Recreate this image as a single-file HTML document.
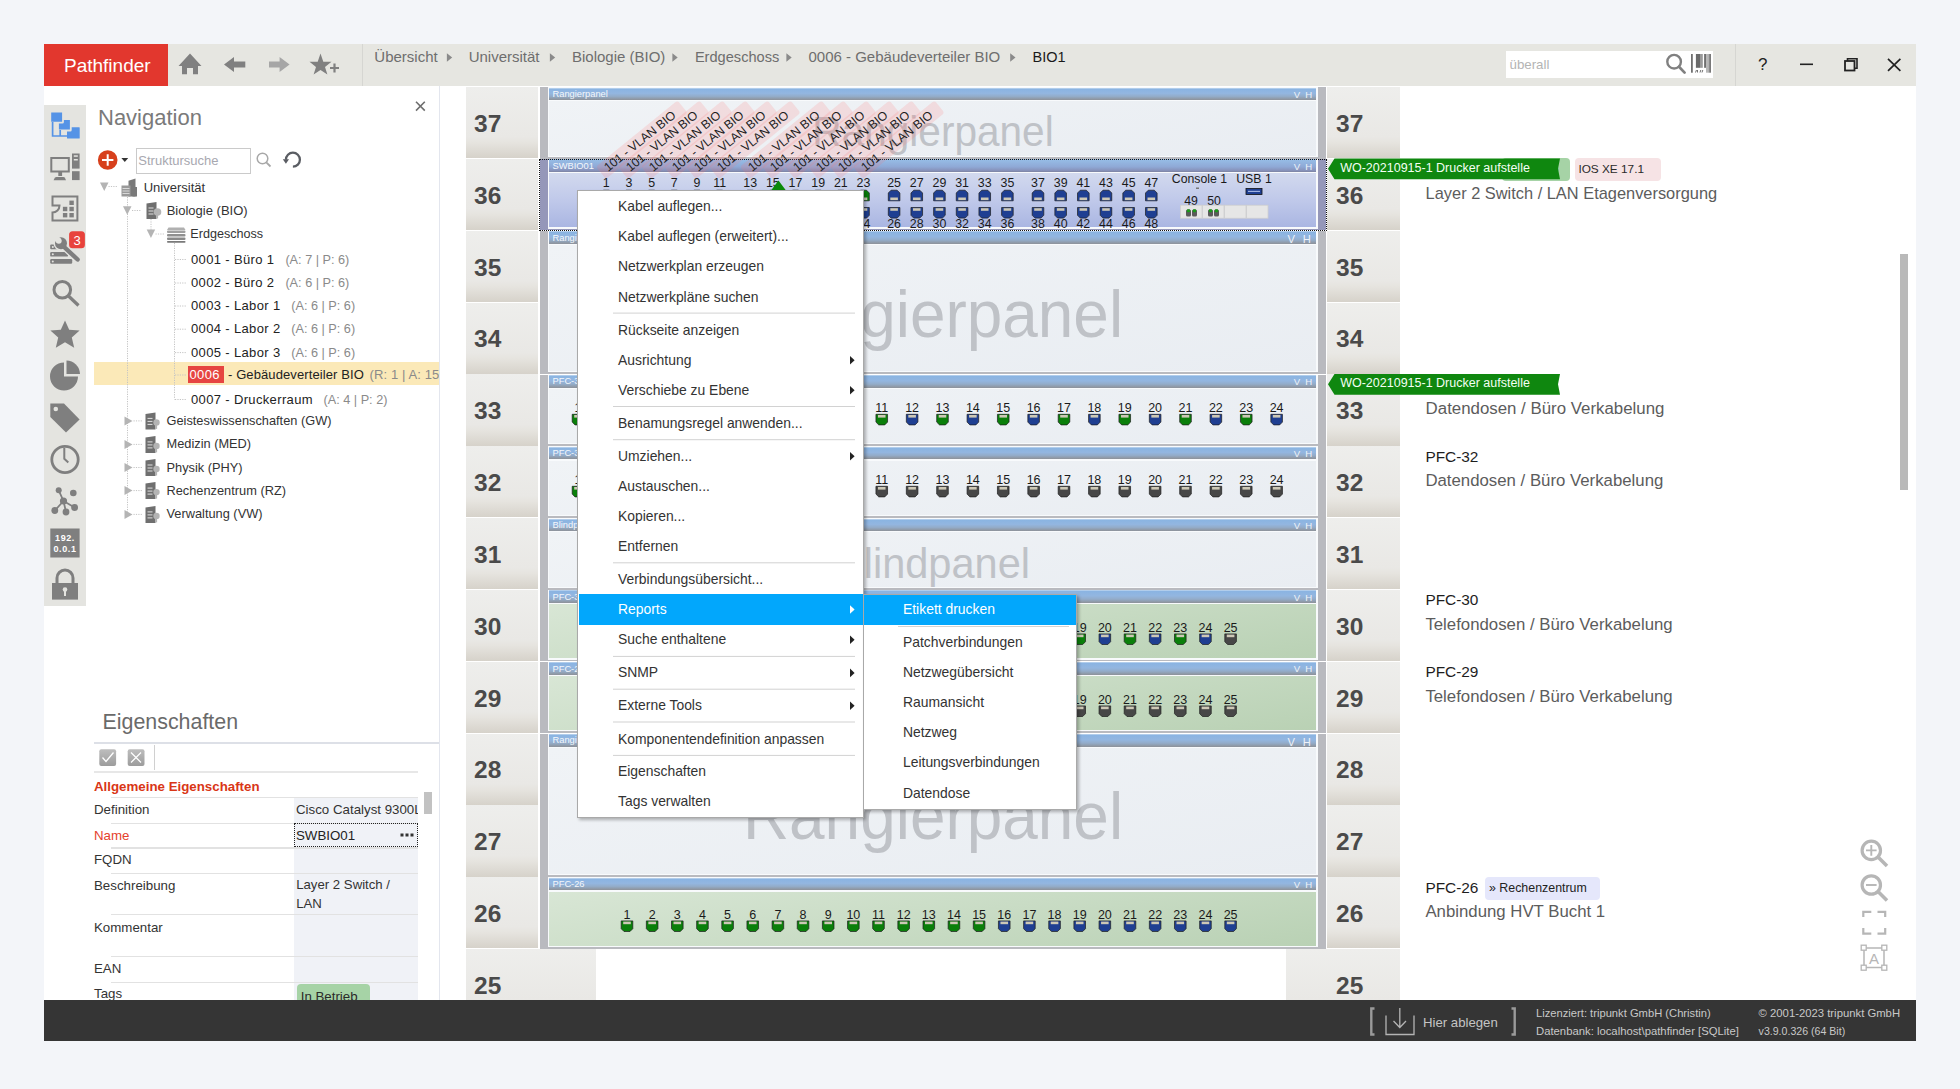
<!DOCTYPE html><html><head><meta charset="utf-8"><style>
html,body{margin:0;padding:0;}
body{width:1960px;height:1089px;overflow:hidden;background:#f3f5f9;position:relative;font-family:"Liberation Sans", sans-serif;}
.t{position:absolute;white-space:nowrap;font-family:"Liberation Sans", sans-serif;}
svg{position:absolute;overflow:visible;}
</style></head><body>
<div style="position:absolute;left:44px;top:44px;width:1872px;height:956px;background:#fff"></div>
<div style="position:absolute;left:168px;top:44px;width:1748px;height:42px;background:#e6e6e1"></div>
<div style="position:absolute;left:44px;top:44px;width:124px;height:42px;background:#e2372e"></div>
<div class="t" style="left:64px;top:52.30px;height:27px;line-height:27px;font-size:19px;color:#fff;font-weight:400;">Pathfinder</div>
<div style="position:absolute;left:362px;top:44px;width:1px;height:42px;background:#d6d6d2"></div>
<div style="position:absolute;left:1735px;top:44px;width:1px;height:42px;background:#d6d6d2"></div>
<svg style="left:0;top:0" width="1960" height="100">
<path d="M178.5 66 L190 53.5 L201.5 66 L198 66 L198 74.3 L193 74.3 L193 68 L187 68 L187 74.3 L182 74.3 L182 66 Z" fill="#808080"/>
<path d="M224 64.5 L234 57 L234 61.5 L245.3 61.5 L245.3 67.5 L234 67.5 L234 72 Z" fill="#808080"/>
<path d="M289.6 64.5 L279.6 57 L279.6 61.5 L269 61.5 L269 67.5 L279.6 67.5 L279.6 72 Z" fill="#a6a6a6"/>
<path d="M320.5 53.5 L323.3 61.8 L331.5 61.8 L325 67 L327.4 74.5 L320.5 70 L313.6 74.5 L316 67 L309.5 61.8 L317.7 61.8 Z" fill="#808080"/>
<path d="M330 68 h9 M334.5 63.5 v9" stroke="#808080" stroke-width="2.2"/>
</svg>
<div class="t" style="left:374.3px;top:46.00px;height:21px;line-height:21px;font-size:15px;color:#6e6e6e;font-weight:400;">Übersicht</div>
<svg style="left:0;top:0" width="1" height="1"><path d="M446.9 53.2 L452.2 57.5 L446.9 61.7 Z" fill="#8a8a8a"/></svg>
<div class="t" style="left:468.7px;top:46.00px;height:21px;line-height:21px;font-size:15px;color:#6e6e6e;font-weight:400;">Universität</div>
<svg style="left:0;top:0" width="1" height="1"><path d="M549.9 53.2 L555.2 57.5 L549.9 61.7 Z" fill="#8a8a8a"/></svg>
<div class="t" style="left:572px;top:46.00px;height:21px;line-height:21px;font-size:15px;color:#6e6e6e;font-weight:400;">Biologie (BIO)</div>
<svg style="left:0;top:0" width="1" height="1"><path d="M672.4 53.2 L677.7 57.5 L672.4 61.7 Z" fill="#8a8a8a"/></svg>
<div class="t" style="left:694.9px;top:46.50px;height:20px;line-height:20px;font-size:14.6px;color:#6e6e6e;font-weight:400;">Erdgeschoss</div>
<svg style="left:0;top:0" width="1" height="1"><path d="M786.4 53.2 L791.7 57.5 L786.4 61.7 Z" fill="#8a8a8a"/></svg>
<div class="t" style="left:808.5px;top:46.00px;height:21px;line-height:21px;font-size:15px;color:#6e6e6e;font-weight:400;">0006 - Gebäudeverteiler BIO</div>
<svg style="left:0;top:0" width="1" height="1"><path d="M1010.1999999999999 53.2 L1015.5 57.5 L1010.1999999999999 61.7 Z" fill="#8a8a8a"/></svg>
<div class="t" style="left:1032.5px;top:46.50px;height:20px;line-height:20px;font-size:14.5px;color:#1a1a1a;font-weight:400;">BIO1</div>
<div style="position:absolute;left:1505.5px;top:51px;width:207.4px;height:27px;background:#fff"></div>
<div class="t" style="left:1509.5px;top:55.00px;height:19px;line-height:19px;font-size:13.3px;color:#b4b4b4;font-weight:400;">überall</div>
<svg style="left:0;top:0" width="1" height="1">
<circle cx="1674.1" cy="61.7" r="6.8" fill="none" stroke="#808080" stroke-width="2.4"/>
<path d="M1679 66.8 L1684.6 72.6" stroke="#808080" stroke-width="2.7" stroke-linecap="round"/>
<rect x="1691" y="54" width="1.8" height="18.7" fill="#707070"/>
<rect x="1695.9" y="54" width="4.1" height="13.8" fill="#6a6a6a"/>
<rect x="1700" y="54" width="2.8" height="13.8" fill="#9a9a9a"/>
<rect x="1704.1" y="54" width="1.9" height="13.8" fill="#707070"/>
<rect x="1706" y="54" width="2.5" height="18.7" fill="#b8b8b8"/>
<rect x="1708.5" y="54" width="1.5" height="18.7" fill="#8a8a8a"/>
<rect x="1710" y="54" width="0.9" height="18.7" fill="#6a6a6a"/>
<path d="M1695.5 72.5 l1 -2.5 M1697.5 72.5 v-2.5 M1700 72.5 l0.8 -2.5 M1702 72.5 l0.8 -2.5" stroke="#606060" stroke-width="0.9"/>
</svg>
<div class="t" style="left:1562.80px;width:400px;text-align:center;top:52.50px;height:24px;line-height:24px;font-size:17px;color:#222;font-weight:400;">?</div>
<svg style="left:0;top:0" width="1" height="1">
<path d="M1800 64.3 h13" stroke="#222" stroke-width="1.6"/>
<rect x="1845" y="61" width="9.5" height="9.5" fill="none" stroke="#222" stroke-width="1.8"/>
<path d="M1847.5 61 v-2.2 h9.5 v9.5 h-2.5" fill="none" stroke="#222" stroke-width="1.6"/>
<path d="M1888 58.8 L1900.4 70.8 M1900.4 58.8 L1888 70.8" stroke="#222" stroke-width="1.7"/>
</svg>
<div style="position:absolute;left:44px;top:105px;width:42px;height:501px;background:#e4e4e0"></div>
<svg style="left:0;top:0" width="1" height="1">
<rect x="67" y="127.2" width="12.7" height="11.4" rx="0.6" fill="#5593e6"/>
<rect x="58" y="119" width="12.8" height="11.5" rx="0.6" fill="#5593e6" stroke="#e4e4e0" stroke-width="1.8"/>
<rect x="50.3" y="111.5" width="12.7" height="11.2" rx="0.6" fill="#5593e6" stroke="#e4e4e0" stroke-width="1.8"/>
<path d="M52.6 122 V136 H68 M60.2 130 V136" stroke="#5593e6" stroke-width="1.7" fill="none"/>
<g fill="none" stroke="#7f7f7f" stroke-width="2">
<rect x="51.3" y="158" width="17.5" height="13.5"/>
</g>
<rect x="58.3" y="171.8" width="3.8" height="4.2" fill="#7f7f7f"/>
<path d="M53.6 180.2 L54.8 177.8 Q55.3 177 56.5 177 H63.2 Q64.4 177 64.9 177.8 L66 180.2 Z" fill="#7f7f7f"/>
<rect x="72" y="153.5" width="7.6" height="15.1" fill="#7f7f7f"/>
<rect x="72" y="171.2" width="7.6" height="8.9" fill="#7f7f7f"/>
<rect x="73.8" y="155.3" width="4" height="1.5" fill="#e4e4e0"/>
<rect x="73.8" y="159" width="4" height="1.5" fill="#e4e4e0"/>
<path d="M52.5 205.5 V196.4 H77.4 V220.5 H52.5 V212.5 A7 7 0 0 0 59.5 205.5 Z" fill="none" stroke="#7f7f7f" stroke-width="2"/>
<g fill="#7f7f7f"><rect x="69.4" y="200.6" width="4.4" height="4.4"/><rect x="62.9" y="206.8" width="4.4" height="4.4"/><rect x="69.4" y="206.8" width="4.4" height="4.4"/><rect x="62.9" y="213" width="4.4" height="4.4"/><rect x="69.4" y="213" width="4.4" height="4.4"/></g>
<g fill="#7f7f7f">
<path d="M50.2 245.5 a1 1 0 0 1 1 -1 h4 l3 4.8 h-7 a1 1 0 0 1 -1 -1 z"/>
<rect x="50.2" y="252" width="17.8" height="4.6" rx="1.2"/>
<rect x="50.2" y="259" width="22" height="4.8" rx="1.2"/>
</g>
<g fill="#e4e4e0"><circle cx="52.8" cy="247" r="1"/><circle cx="52.8" cy="254.3" r="1"/><circle cx="52.8" cy="261.4" r="1"/></g>
<path d="M62 245 L77.6 259.5" stroke="#e4e4e0" stroke-width="7" stroke-linecap="round"/>
<circle cx="61" cy="243.3" r="7.5" fill="#e4e4e0"/>
<path d="M62 245 L77.6 259.5" stroke="#7f7f7f" stroke-width="4.4" stroke-linecap="round"/>
<circle cx="61" cy="243.3" r="6" fill="#7f7f7f"/>
<circle cx="58.8" cy="240.8" r="2.9" fill="#e4e4e0"/>
<path d="M58.8 240.8 L53 235" stroke="#e4e4e0" stroke-width="5.8"/>
<rect x="69.1" y="231.3" width="15.8" height="16.9" rx="3.5" fill="#e8423c"/>
<text x="77" y="245.2" font-size="13" fill="#fff" text-anchor="middle" font-family="Liberation Sans">3</text>
<circle cx="62.3" cy="289.8" r="8.3" fill="none" stroke="#7f7f7f" stroke-width="3"/>
<path d="M68.5 296 L78.5 305.5" stroke="#7f7f7f" stroke-width="3.2"/>
<path d="M65 320.4 L69.2 329.8 L79.6 330.5 L71.8 337.5 L74.2 347.7 L65 342.3 L55.8 347.7 L58.2 337.5 L50.4 330.5 L60.8 329.8 Z" fill="#7f7f7f"/>
<path d="M64 362.5 A14 14 0 1 0 78 376.5 L64 376.5 Z" fill="#7f7f7f"/>
<path d="M66.5 360.5 A14 14 0 0 1 80 374 L66.5 374 Z" fill="#7f7f7f"/>
<path d="M50.3 403.5 L64 403.5 L79.6 419.5 L66 432.5 L50.3 417 Z" fill="#7f7f7f"/>
<circle cx="55.8" cy="409" r="2.3" fill="#e4e4e0"/>
<circle cx="65" cy="459.5" r="13.2" fill="none" stroke="#7f7f7f" stroke-width="2.8"/>
<path d="M64.3 448 v10.8 l4 3.8" fill="none" stroke="#7f7f7f" stroke-width="2"/>
<g stroke="#7f7f7f" stroke-width="1.8"><path d="M63.5 501 L58.7 490.3 M63.5 501 L54.8 510.5 M63.5 501 L66 512 M63.5 501 L74.6 507.5"/></g>
<g fill="#7f7f7f"><circle cx="63.5" cy="501" r="3.6"/><circle cx="58.7" cy="490.3" r="3"/><circle cx="73.3" cy="493" r="3.3"/><circle cx="54.8" cy="510.5" r="3.4"/><circle cx="66" cy="512" r="3.4"/><circle cx="74.6" cy="507.5" r="3.4"/></g>
<rect x="50.3" y="528.5" width="29.3" height="29" fill="#7f7f7f"/>
<text x="65" y="540.5" font-size="9" fill="#fff" text-anchor="middle" font-weight="700" font-family="Liberation Sans" letter-spacing="0.6">192.</text>
<text x="65" y="552" font-size="9" fill="#fff" text-anchor="middle" font-weight="700" font-family="Liberation Sans" letter-spacing="0.6">0.0.1</text>
<path d="M57 583 v-5 a8 8 0 0 1 16 0 v5" fill="none" stroke="#7f7f7f" stroke-width="3"/>
<rect x="52" y="583" width="26" height="16.6" fill="#7f7f7f"/>
<circle cx="65" cy="589.5" r="2.3" fill="#e4e4e0"/>
<rect x="64" y="590" width="2" height="6" fill="#e4e4e0"/>
</svg>
<div style="position:absolute;left:439px;top:86px;width:1px;height:914px;background:#e3e6ee"></div>
<div class="t" style="left:98px;top:102.40px;height:31px;line-height:31px;font-size:22px;color:#7a7a7a;font-weight:400;">Navigation</div>
<svg style="left:0;top:0" width="1" height="1">
<path d="M416 101.8 L424.8 110.6 M424.8 101.8 L416 110.6" stroke="#6e6e6e" stroke-width="1.6"/>
<circle cx="107.7" cy="160" r="9.8" fill="#d7401c"/>
<path d="M102 160 h11.4 M107.7 154.3 v11.4" stroke="#fff" stroke-width="2"/>
<path d="M121.4 158 h6.8 l-3.4 4 z" fill="#333"/>
<circle cx="262.5" cy="158.5" r="5.3" fill="none" stroke="#a8a8a8" stroke-width="1.5"/>
<path d="M266.3 162.3 L270.5 166.5" stroke="#a8a8a8" stroke-width="1.8"/>
<path d="M285.9 159.7 A7 7 0 1 1 292.9 166.7" fill="none" stroke="#5a5d63" stroke-width="2.3"/>
<path d="M282.8 159.3 L289 159.3 L285.9 163.8 Z" fill="#5a5d63"/>
</svg>
<div style="position:absolute;left:135.5px;top:147.5px;width:113.5px;height:24.5px;border:1px solid #cacaca;background:#fff"></div>
<div class="t" style="left:138.3px;top:151.50px;height:18px;line-height:18px;font-size:13px;color:#a8a8b0;font-weight:400;">Struktursuche</div>
<div style="position:absolute;left:94px;top:362px;width:345px;height:23.2px;background:#fbe9b8"></div>
<svg style="left:0;top:0" width="1" height="1"><g stroke="#c4c4c4" stroke-width="1" stroke-dasharray="1.2 1.2" fill="none"><path d="M127.5 197 V514.5"/><path d="M151 219 V234"/><path d="M174.5 243 V399.5"/><path d="M108.5 186.5 h9 M132 210.5 h9 M155.5 234 h9"/><path d="M175 259.5 h12"/><path d="M175 283.0 h12"/><path d="M175 306.0 h12"/><path d="M175 329.2 h12"/><path d="M175 352.6 h12"/><path d="M175 375.0 h12"/><path d="M175 399.5 h12"/><path d="M133.5 420.9 h9"/><path d="M133.5 444.4 h9"/><path d="M133.5 467.5 h9"/><path d="M133.5 490.6 h9"/><path d="M133.5 514.4 h9"/></g><path d="M100 182.5 h8.5 l-4.25 8.5 z" fill="#b4b4b4"/><path d="M123 206.3 h8.5 l-4.25 8.5 z" fill="#b4b4b4"/><path d="M146.7 229.5 h8.5 l-4.25 8.5 z" fill="#b4b4b4"/><path d="M124.5 416.4 l8 4.5 l-8 4.5 z" fill="#b4b4b4"/><path d="M124.5 439.9 l8 4.5 l-8 4.5 z" fill="#b4b4b4"/><path d="M124.5 463.0 l8 4.5 l-8 4.5 z" fill="#b4b4b4"/><path d="M124.5 486.1 l8 4.5 l-8 4.5 z" fill="#b4b4b4"/><path d="M124.5 509.9 l8 4.5 l-8 4.5 z" fill="#b4b4b4"/><g fill="#7a7a7a"><path d="M128.5 180.8 L135.5 178.6 V196.5 H128.5 Z"/><rect x="132.5" y="187" width="4.5" height="9.5"/></g>
<g fill="#9a9a9a"><rect x="121.5" y="185.5" width="9" height="11"/></g>
<g stroke="#e8e8e8" stroke-width="0.8"><path d="M122.5 188.5 h7 M122.5 191 h7 M122.5 193.5 h7"/></g><g><path d="M146.5 203.5 L156.5 202 V219 H146.5 Z" fill="#6f6f6f"/>
<path d="M148.5 208 h5 M148.5 211 h5 M148.5 214 h5" stroke="#e0e0e0" stroke-width="1"/>
<circle cx="157.5" cy="212" r="3.8" fill="#b4b4b4"/><rect x="156.9" y="214" width="1.2" height="4.5" fill="#b4b4b4"/></g><g><path d="M145.5 413.9 L155.5 412.4 V429.4 H145.5 Z" fill="#6f6f6f"/>
<path d="M147.5 418.4 h5 M147.5 421.4 h5 M147.5 424.4 h5" stroke="#e0e0e0" stroke-width="1"/>
<circle cx="156.5" cy="422.4" r="3.2" fill="#b4b4b4"/><rect x="155.9" y="424.4" width="1.2" height="4.5" fill="#b4b4b4"/></g><g><path d="M145.5 437.4 L155.5 435.9 V452.9 H145.5 Z" fill="#6f6f6f"/>
<path d="M147.5 441.9 h5 M147.5 444.9 h5 M147.5 447.9 h5" stroke="#e0e0e0" stroke-width="1"/>
<circle cx="156.5" cy="445.9" r="3.2" fill="#b4b4b4"/><rect x="155.9" y="447.9" width="1.2" height="4.5" fill="#b4b4b4"/></g><g><path d="M145.5 460.5 L155.5 459.0 V476.0 H145.5 Z" fill="#6f6f6f"/>
<path d="M147.5 465.0 h5 M147.5 468.0 h5 M147.5 471.0 h5" stroke="#e0e0e0" stroke-width="1"/>
<circle cx="156.5" cy="469.0" r="3.2" fill="#b4b4b4"/><rect x="155.9" y="471.0" width="1.2" height="4.5" fill="#b4b4b4"/></g><g><path d="M145.5 483.6 L155.5 482.1 V499.1 H145.5 Z" fill="#6f6f6f"/>
<path d="M147.5 488.1 h5 M147.5 491.1 h5 M147.5 494.1 h5" stroke="#e0e0e0" stroke-width="1"/>
<circle cx="156.5" cy="492.1" r="3.2" fill="#b4b4b4"/><rect x="155.9" y="494.1" width="1.2" height="4.5" fill="#b4b4b4"/></g><g><path d="M145.5 507.4 L155.5 505.9 V522.9 H145.5 Z" fill="#6f6f6f"/>
<path d="M147.5 511.9 h5 M147.5 514.9 h5 M147.5 517.9 h5" stroke="#e0e0e0" stroke-width="1"/>
<circle cx="156.5" cy="515.9" r="3.2" fill="#b4b4b4"/><rect x="155.9" y="517.9" width="1.2" height="4.5" fill="#b4b4b4"/></g><g fill="#8a8a8a"><path d="M168.5 227.5 h15.5 l1.5 2.5 h-18.5 z" fill="#b0b0b0"/><rect x="167" y="230.5" width="18.5" height="2.5" rx="1" fill="#a0a0a0"/><rect x="167" y="234" width="18.5" height="2.5" rx="1" fill="#909090"/><rect x="167" y="237.5" width="18.5" height="2.5" rx="1"/><rect x="167" y="241" width="18.5" height="1.8" rx="0.8" fill="#7a7a7a"/></g></svg>
<div class="t" style="left:143.7px;top:179.00px;height:18px;line-height:18px;font-size:13px;color:#333;font-weight:400;">Universität</div>
<div class="t" style="left:166.7px;top:201.80px;height:18px;line-height:18px;font-size:13px;color:#333;font-weight:400;">Biologie (BIO)</div>
<div class="t" style="left:190.3px;top:225.20px;height:18px;line-height:18px;font-size:12.6px;color:#333;font-weight:400;">Erdgeschoss</div>
<div class="t" style="left:191px;top:250.50px;height:18px;line-height:18px;font-size:13px;color:#222;font-weight:400;letter-spacing:0.35px">0001 - Büro 1</div>
<div class="t" style="left:285.4px;top:250.50px;height:18px;line-height:18px;font-size:12.7px;color:#8a8a8a;font-weight:400;">(A: 7 | P: 6)</div>
<div class="t" style="left:191px;top:274.00px;height:18px;line-height:18px;font-size:13px;color:#222;font-weight:400;letter-spacing:0.35px">0002 - Büro 2</div>
<div class="t" style="left:285.4px;top:274.00px;height:18px;line-height:18px;font-size:12.7px;color:#8a8a8a;font-weight:400;">(A: 6 | P: 6)</div>
<div class="t" style="left:191px;top:297.00px;height:18px;line-height:18px;font-size:13px;color:#222;font-weight:400;letter-spacing:0.35px">0003 - Labor 1</div>
<div class="t" style="left:291.2px;top:297.00px;height:18px;line-height:18px;font-size:12.7px;color:#8a8a8a;font-weight:400;">(A: 6 | P: 6)</div>
<div class="t" style="left:191px;top:320.20px;height:18px;line-height:18px;font-size:13px;color:#222;font-weight:400;letter-spacing:0.35px">0004 - Labor 2</div>
<div class="t" style="left:291.2px;top:320.20px;height:18px;line-height:18px;font-size:12.7px;color:#8a8a8a;font-weight:400;">(A: 6 | P: 6)</div>
<div class="t" style="left:191px;top:343.60px;height:18px;line-height:18px;font-size:13px;color:#222;font-weight:400;letter-spacing:0.35px">0005 - Labor 3</div>
<div class="t" style="left:291.2px;top:343.60px;height:18px;line-height:18px;font-size:12.7px;color:#8a8a8a;font-weight:400;">(A: 6 | P: 6)</div>
<div class="t" style="left:191px;top:390.50px;height:18px;line-height:18px;font-size:13px;color:#222;font-weight:400;letter-spacing:0.35px">0007 - Druckerraum</div>
<div class="t" style="left:323.5px;top:390.50px;height:18px;line-height:18px;font-size:12.7px;color:#8a8a8a;font-weight:400;">(A: 4 | P: 2)</div>
<div style="position:absolute;left:188px;top:365.5px;width:35.6px;height:17px;background:#e64541"></div>
<div class="t" style="left:189.5px;top:366.00px;height:18px;line-height:18px;font-size:13px;color:#fff;font-weight:400;letter-spacing:0.35px">0006</div>
<div class="t" style="left:228px;top:365.9px;height:18px;line-height:18px;font-size:13px;color:#222;width:211px;overflow:hidden;letter-spacing:0.1px">- Gebäudeverteiler BIO <span style="color:#8a8a8a;margin-left:2px">(R: 1 | A: 15 | P: 6)</span></div>
<div class="t" style="left:166.5px;top:411.90px;height:18px;line-height:18px;font-size:12.8px;color:#333;font-weight:400;">Geisteswissenschaften (GW)</div>
<div class="t" style="left:166.5px;top:435.40px;height:18px;line-height:18px;font-size:12.8px;color:#333;font-weight:400;">Medizin (MED)</div>
<div class="t" style="left:166.5px;top:458.50px;height:18px;line-height:18px;font-size:12.8px;color:#333;font-weight:400;">Physik (PHY)</div>
<div class="t" style="left:166.5px;top:481.60px;height:18px;line-height:18px;font-size:12.8px;color:#333;font-weight:400;">Rechenzentrum (RZ)</div>
<div class="t" style="left:166.5px;top:505.40px;height:18px;line-height:18px;font-size:12.8px;color:#333;font-weight:400;">Verwaltung (VW)</div>
<div class="t" style="left:102.5px;top:707.40px;height:30px;line-height:30px;font-size:21.4px;color:#6a6a6a;font-weight:400;">Eigenschaften</div>
<div style="position:absolute;left:94px;top:742px;width:345px;height:2px;background:#dde0e7"></div>
<svg style="left:0;top:0" width="1" height="1">
<defs><linearGradient id="gb" x1="0" y1="0" x2="0" y2="1"><stop offset="0" stop-color="#bdbdbd"/><stop offset="1" stop-color="#9c9c9c"/></linearGradient></defs>
<rect x="99.3" y="749.3" width="16.8" height="16.8" rx="2" fill="url(#gb)"/>
<path d="M102.5 757.5 L106 761.5 L113.5 752.5" fill="none" stroke="#fff" stroke-width="1.3"/>
<rect x="127.7" y="749.3" width="16.8" height="16.8" rx="2" fill="url(#gb)"/>
<path d="M131 752.5 L141 762.5 M141 752.5 L131 762.5" stroke="#fff" stroke-width="1.2"/>
</svg>
<div style="position:absolute;left:153.5px;top:745px;width:1.2px;height:25px;background:#d0d0d0"></div>
<div style="position:absolute;left:94px;top:771px;width:324px;height:1.5px;background:#e7e7e7"></div>
<div class="t" style="left:94px;top:776.70px;height:19px;line-height:19px;font-size:13.3px;color:#d93616;font-weight:700;">Allgemeine Eigenschaften</div>
<div style="position:absolute;left:294px;top:797.5px;width:124px;height:202.5px;background:#f0f2f7"></div>
<div style="position:absolute;left:111px;top:797px;width:307px;height:1.2px;background:#e2e2e2"></div>
<div style="position:absolute;left:111px;top:822.6px;width:307px;height:1.2px;background:#e2e2e2"></div>
<div style="position:absolute;left:111px;top:847.4px;width:307px;height:1.2px;background:#e2e2e2"></div>
<div style="position:absolute;left:111px;top:872.7px;width:307px;height:1.2px;background:#e2e2e2"></div>
<div style="position:absolute;left:111px;top:914.3px;width:307px;height:1.2px;background:#e2e2e2"></div>
<div style="position:absolute;left:111px;top:956.2px;width:307px;height:1.2px;background:#e2e2e2"></div>
<div style="position:absolute;left:111px;top:981.5px;width:307px;height:1.2px;background:#e2e2e2"></div>
<div class="t" style="left:94px;top:800.10px;height:19px;line-height:19px;font-size:13.3px;color:#333;font-weight:400;">Definition</div>
<div class="t" style="left:94px;top:825.50px;height:19px;line-height:19px;font-size:13.3px;color:#e5412d;font-weight:400;">Name</div>
<div class="t" style="left:94px;top:850.30px;height:19px;line-height:19px;font-size:13.3px;color:#333;font-weight:400;">FQDN</div>
<div class="t" style="left:94px;top:875.90px;height:19px;line-height:19px;font-size:13.3px;color:#333;font-weight:400;">Beschreibung</div>
<div class="t" style="left:94px;top:918.00px;height:19px;line-height:19px;font-size:13.3px;color:#333;font-weight:400;">Kommentar</div>
<div class="t" style="left:94px;top:959.10px;height:19px;line-height:19px;font-size:13.3px;color:#333;font-weight:400;">EAN</div>
<div class="t" style="left:94px;top:983.90px;height:19px;line-height:19px;font-size:13.3px;color:#333;font-weight:400;">Tags</div>
<div class="t" style="left:296px;top:800px;height:19px;line-height:19px;font-size:13.3px;color:#333;width:122px;overflow:hidden">Cisco Catalyst 9300L-48P-4X</div>
<div style="position:absolute;left:294px;top:823.4px;width:124px;height:23.4px;border:1px dotted #222;box-sizing:border-box"></div>
<div class="t" style="left:296px;top:825.50px;height:19px;line-height:19px;font-size:13.3px;color:#222;font-weight:400;">SWBIO01</div>
<svg style="left:0;top:0" width="1" height="1"><g fill="#333"><rect x="400.5" y="833.5" width="3" height="3"/><rect x="405.5" y="833.5" width="3" height="3"/><rect x="410.5" y="833.5" width="3" height="3"/></g></svg>
<div class="t" style="left:296.2px;top:876.40px;height:18px;line-height:18px;font-size:13.2px;color:#333;font-weight:400;">Layer 2 Switch /</div>
<div class="t" style="left:296.2px;top:894.90px;height:18px;line-height:18px;font-size:13.2px;color:#333;font-weight:400;">LAN</div>
<div style="position:absolute;left:423.5px;top:792px;width:8.2px;height:22px;background:#c2c2c2"></div>
<div style="position:absolute;left:296.7px;top:983.7px;width:73px;height:16.3px;overflow:hidden;background:#a6d3a6;border-radius:4px 4px 0 0"><div class="t" style="left:4px;top:4.5px;height:18px;line-height:18px;font-size:13.3px;color:#2a2a2a">In Betrieb</div></div>
<div style="position:absolute;left:44px;top:1000px;width:1872px;height:41.4px;background:#353535"></div>
<svg style="left:0;top:0" width="1" height="1">
<path d="M1374.5 1008.5 h-3.2 v26 h3.2" fill="none" stroke="#9a9a9a" stroke-width="2.4"/>
<path d="M1511.5 1008.5 h3.2 v26 h-3.2" fill="none" stroke="#9a9a9a" stroke-width="2.4"/>
<path d="M1386 1015.5 v19 h28 v-19" fill="none" stroke="#b4b4b4" stroke-width="1.3"/>
<path d="M1399.8 1008 v19 M1393.5 1021 L1399.8 1027.5 L1406 1021" fill="none" stroke="#b4b4b4" stroke-width="1.3"/>
</svg>
<div class="t" style="left:1423px;top:1013.50px;height:18px;line-height:18px;font-size:13.2px;color:#c4c4c4;font-weight:400;">Hier ablegen</div>
<div class="t" style="left:1536px;top:1004.60px;height:16px;line-height:16px;font-size:11.2px;color:#c8c8c8;font-weight:400;">Lizenziert: tripunkt GmbH (Christin)</div>
<div class="t" style="left:1536px;top:1023.00px;height:16px;line-height:16px;font-size:11.3px;color:#c8c8c8;font-weight:400;">Datenbank: localhost\pathfinder [SQLite]</div>
<div class="t" style="left:1758.6px;top:1004.60px;height:16px;line-height:16px;font-size:11.3px;color:#c8c8c8;font-weight:400;">© 2001-2023 tripunkt GmbH</div>
<div class="t" style="left:1758.6px;top:1023.50px;height:15px;line-height:15px;font-size:10.6px;color:#c8c8c8;font-weight:400;">v3.9.0.326 (64 Bit)</div>
<div style="position:absolute;left:466px;top:87.0px;width:72px;height:71.23px;background:linear-gradient(to bottom,#eeeeec 0%,#e9e8e5 70%,#e6e4df 78%,#d6d2ca 100%)"></div>
<div style="position:absolute;left:1327px;top:87.0px;width:73px;height:71.23px;background:linear-gradient(to bottom,#eeeeec 0%,#e9e8e5 70%,#e6e4df 78%,#d6d2ca 100%)"></div>
<div class="t" style="left:474px;top:106.92px;height:34px;line-height:34px;font-size:24.5px;color:#4a4a4a;font-weight:700;">37</div>
<div class="t" style="left:1336px;top:106.92px;height:34px;line-height:34px;font-size:24.5px;color:#4a4a4a;font-weight:700;">37</div>
<div style="position:absolute;left:466px;top:158.83px;width:72px;height:71.23px;background:linear-gradient(to bottom,#eeeeec 0%,#e9e8e5 70%,#e6e4df 78%,#d6d2ca 100%)"></div>
<div style="position:absolute;left:1327px;top:158.83px;width:73px;height:71.23px;background:linear-gradient(to bottom,#eeeeec 0%,#e9e8e5 70%,#e6e4df 78%,#d6d2ca 100%)"></div>
<div class="t" style="left:474px;top:178.75px;height:34px;line-height:34px;font-size:24.5px;color:#4a4a4a;font-weight:700;">36</div>
<div class="t" style="left:1336px;top:178.75px;height:34px;line-height:34px;font-size:24.5px;color:#4a4a4a;font-weight:700;">36</div>
<div style="position:absolute;left:466px;top:230.67px;width:72px;height:71.23px;background:linear-gradient(to bottom,#eeeeec 0%,#e9e8e5 70%,#e6e4df 78%,#d6d2ca 100%)"></div>
<div style="position:absolute;left:1327px;top:230.67px;width:73px;height:71.23px;background:linear-gradient(to bottom,#eeeeec 0%,#e9e8e5 70%,#e6e4df 78%,#d6d2ca 100%)"></div>
<div class="t" style="left:474px;top:250.58px;height:34px;line-height:34px;font-size:24.5px;color:#4a4a4a;font-weight:700;">35</div>
<div class="t" style="left:1336px;top:250.58px;height:34px;line-height:34px;font-size:24.5px;color:#4a4a4a;font-weight:700;">35</div>
<div style="position:absolute;left:466px;top:302.5px;width:72px;height:71.23px;background:linear-gradient(to bottom,#eeeeec 0%,#e9e8e5 70%,#e6e4df 78%,#d6d2ca 100%)"></div>
<div style="position:absolute;left:1327px;top:302.5px;width:73px;height:71.23px;background:linear-gradient(to bottom,#eeeeec 0%,#e9e8e5 70%,#e6e4df 78%,#d6d2ca 100%)"></div>
<div class="t" style="left:474px;top:322.42px;height:34px;line-height:34px;font-size:24.5px;color:#4a4a4a;font-weight:700;">34</div>
<div class="t" style="left:1336px;top:322.42px;height:34px;line-height:34px;font-size:24.5px;color:#4a4a4a;font-weight:700;">34</div>
<div style="position:absolute;left:466px;top:374.33px;width:72px;height:71.23px;background:linear-gradient(to bottom,#eeeeec 0%,#e9e8e5 70%,#e6e4df 78%,#d6d2ca 100%)"></div>
<div style="position:absolute;left:1327px;top:374.33px;width:73px;height:71.23px;background:linear-gradient(to bottom,#eeeeec 0%,#e9e8e5 70%,#e6e4df 78%,#d6d2ca 100%)"></div>
<div class="t" style="left:474px;top:394.25px;height:34px;line-height:34px;font-size:24.5px;color:#4a4a4a;font-weight:700;">33</div>
<div class="t" style="left:1336px;top:394.25px;height:34px;line-height:34px;font-size:24.5px;color:#4a4a4a;font-weight:700;">33</div>
<div style="position:absolute;left:466px;top:446.17px;width:72px;height:71.23px;background:linear-gradient(to bottom,#eeeeec 0%,#e9e8e5 70%,#e6e4df 78%,#d6d2ca 100%)"></div>
<div style="position:absolute;left:1327px;top:446.17px;width:73px;height:71.23px;background:linear-gradient(to bottom,#eeeeec 0%,#e9e8e5 70%,#e6e4df 78%,#d6d2ca 100%)"></div>
<div class="t" style="left:474px;top:466.08px;height:34px;line-height:34px;font-size:24.5px;color:#4a4a4a;font-weight:700;">32</div>
<div class="t" style="left:1336px;top:466.08px;height:34px;line-height:34px;font-size:24.5px;color:#4a4a4a;font-weight:700;">32</div>
<div style="position:absolute;left:466px;top:518.0px;width:72px;height:71.23px;background:linear-gradient(to bottom,#eeeeec 0%,#e9e8e5 70%,#e6e4df 78%,#d6d2ca 100%)"></div>
<div style="position:absolute;left:1327px;top:518.0px;width:73px;height:71.23px;background:linear-gradient(to bottom,#eeeeec 0%,#e9e8e5 70%,#e6e4df 78%,#d6d2ca 100%)"></div>
<div class="t" style="left:474px;top:537.92px;height:34px;line-height:34px;font-size:24.5px;color:#4a4a4a;font-weight:700;">31</div>
<div class="t" style="left:1336px;top:537.92px;height:34px;line-height:34px;font-size:24.5px;color:#4a4a4a;font-weight:700;">31</div>
<div style="position:absolute;left:466px;top:589.83px;width:72px;height:71.23px;background:linear-gradient(to bottom,#eeeeec 0%,#e9e8e5 70%,#e6e4df 78%,#d6d2ca 100%)"></div>
<div style="position:absolute;left:1327px;top:589.83px;width:73px;height:71.23px;background:linear-gradient(to bottom,#eeeeec 0%,#e9e8e5 70%,#e6e4df 78%,#d6d2ca 100%)"></div>
<div class="t" style="left:474px;top:609.75px;height:34px;line-height:34px;font-size:24.5px;color:#4a4a4a;font-weight:700;">30</div>
<div class="t" style="left:1336px;top:609.75px;height:34px;line-height:34px;font-size:24.5px;color:#4a4a4a;font-weight:700;">30</div>
<div style="position:absolute;left:466px;top:661.67px;width:72px;height:71.23px;background:linear-gradient(to bottom,#eeeeec 0%,#e9e8e5 70%,#e6e4df 78%,#d6d2ca 100%)"></div>
<div style="position:absolute;left:1327px;top:661.67px;width:73px;height:71.23px;background:linear-gradient(to bottom,#eeeeec 0%,#e9e8e5 70%,#e6e4df 78%,#d6d2ca 100%)"></div>
<div class="t" style="left:474px;top:681.58px;height:34px;line-height:34px;font-size:24.5px;color:#4a4a4a;font-weight:700;">29</div>
<div class="t" style="left:1336px;top:681.58px;height:34px;line-height:34px;font-size:24.5px;color:#4a4a4a;font-weight:700;">29</div>
<div style="position:absolute;left:466px;top:733.5px;width:72px;height:71.23px;background:linear-gradient(to bottom,#eeeeec 0%,#e9e8e5 70%,#e6e4df 78%,#d6d2ca 100%)"></div>
<div style="position:absolute;left:1327px;top:733.5px;width:73px;height:71.23px;background:linear-gradient(to bottom,#eeeeec 0%,#e9e8e5 70%,#e6e4df 78%,#d6d2ca 100%)"></div>
<div class="t" style="left:474px;top:753.42px;height:34px;line-height:34px;font-size:24.5px;color:#4a4a4a;font-weight:700;">28</div>
<div class="t" style="left:1336px;top:753.42px;height:34px;line-height:34px;font-size:24.5px;color:#4a4a4a;font-weight:700;">28</div>
<div style="position:absolute;left:466px;top:805.33px;width:72px;height:71.23px;background:linear-gradient(to bottom,#eeeeec 0%,#e9e8e5 70%,#e6e4df 78%,#d6d2ca 100%)"></div>
<div style="position:absolute;left:1327px;top:805.33px;width:73px;height:71.23px;background:linear-gradient(to bottom,#eeeeec 0%,#e9e8e5 70%,#e6e4df 78%,#d6d2ca 100%)"></div>
<div class="t" style="left:474px;top:825.25px;height:34px;line-height:34px;font-size:24.5px;color:#4a4a4a;font-weight:700;">27</div>
<div class="t" style="left:1336px;top:825.25px;height:34px;line-height:34px;font-size:24.5px;color:#4a4a4a;font-weight:700;">27</div>
<div style="position:absolute;left:466px;top:877.17px;width:72px;height:71.23px;background:linear-gradient(to bottom,#eeeeec 0%,#e9e8e5 70%,#e6e4df 78%,#d6d2ca 100%)"></div>
<div style="position:absolute;left:1327px;top:877.17px;width:73px;height:71.23px;background:linear-gradient(to bottom,#eeeeec 0%,#e9e8e5 70%,#e6e4df 78%,#d6d2ca 100%)"></div>
<div class="t" style="left:474px;top:897.08px;height:34px;line-height:34px;font-size:24.5px;color:#4a4a4a;font-weight:700;">26</div>
<div class="t" style="left:1336px;top:897.08px;height:34px;line-height:34px;font-size:24.5px;color:#4a4a4a;font-weight:700;">26</div>
<div style="position:absolute;left:466px;top:949.0px;width:130px;height:51.0px;background:linear-gradient(to bottom,#eeeeec,#e9e8e5)"></div>
<div style="position:absolute;left:1286px;top:949.0px;width:114px;height:51.0px;background:linear-gradient(to bottom,#eeeeec,#e9e8e5)"></div>
<div class="t" style="left:474px;top:968.92px;height:34px;line-height:34px;font-size:24.5px;color:#4a4a4a;font-weight:700;">25</div>
<div class="t" style="left:1336px;top:968.92px;height:34px;line-height:34px;font-size:24.5px;color:#4a4a4a;font-weight:700;">25</div>
<div style="position:absolute;left:540px;top:87.3px;width:786px;height:71.23px;background:#b9babf"></div>
<div style="position:absolute;left:548px;top:87.3px;width:770px;height:69.53px;background:#f8fafc"></div>
<div style="position:absolute;left:549px;top:87.6px;width:767px;height:12.6px;background:linear-gradient(to bottom,#d8e6f5 0px,#8ab4e2 1px,#93b6e0 45%,#93acc9 70%,#8f9aa8 90%,#8e9299 100%)"></div>
<div style="position:absolute;left:549px;top:101.4px;width:767px;height:54.13px;background:linear-gradient(170deg,#f0f3f6 0%,#e9edf2 100%)"></div>
<div class="t" style="left:552.5px;top:87.90px;height:13px;line-height:13px;font-size:9.3px;color:#f4f7fb;font-weight:400;">Rangierpanel</div>
<div class="t" style="left:1097.00px;width:400px;text-align:center;top:87.70px;height:13px;line-height:13px;font-size:9.6px;color:#eef2f8;font-weight:400;">V</div>
<div class="t" style="left:1108.70px;width:400px;text-align:center;top:87.70px;height:13px;line-height:13px;font-size:9.6px;color:#eef2f8;font-weight:400;">H</div>
<svg style="left:0;top:0" width="1" height="1"><text transform="translate(933 146.1) scale(0.957 1)" x="0" y="0" font-size="42.4" text-anchor="middle" fill="#bfc2c7" font-family="Liberation Sans">Rangierpanel</text></svg>
<div style="position:absolute;left:540px;top:159.13px;width:786px;height:71.23px;background:#9597b9"></div>
<div style="position:absolute;left:548px;top:159.13px;width:770px;height:69.53px;background:#f8fafc"></div>
<div style="position:absolute;left:549px;top:159.43px;width:767px;height:12.6px;background:linear-gradient(to bottom,#97bfe8 0%,#8fa9d6 60%,#8690b8 90%,#7d83a0 100%)"></div>
<div style="position:absolute;left:549px;top:173.23px;width:767px;height:54.13px;background:linear-gradient(to bottom,#d2d9ee 0%,#c0c9ea 50%,#aab6e2 100%)"></div>
<div class="t" style="left:552.5px;top:159.73px;height:13px;line-height:13px;font-size:9.3px;color:#f4f7fb;font-weight:400;">SWBIO01</div>
<div class="t" style="left:1097.00px;width:400px;text-align:center;top:159.53px;height:13px;line-height:13px;font-size:9.6px;color:#eef2f8;font-weight:400;">V</div>
<div class="t" style="left:1108.70px;width:400px;text-align:center;top:159.53px;height:13px;line-height:13px;font-size:9.6px;color:#eef2f8;font-weight:400;">H</div>
<div style="position:absolute;left:539px;top:158.5px;width:788px;height:72.5px;border:1px dotted #111;box-sizing:border-box"></div>
<svg style="left:0;top:0" width="1" height="1"><text x="606.30" y="187.30" font-size="12.4" text-anchor="middle" fill="#1a1a1a" font-family="Liberation Sans">1</text><text x="606.30" y="228.00" font-size="12.4" text-anchor="middle" fill="#1a1a1a" font-family="Liberation Sans">2</text><path d="M600.50 200.80 h11.6 v-7.8 l-2.8 -2.8 h-6 l-2.8 2.8 z" fill="#1f3f92" stroke="#1c1c1c" stroke-width="0.7"/><rect x="602.50" y="197.50" width="7.6" height="2.6" fill="#cdc8b6"/><path d="M600.50 207.50 h11.6 v7.8 l-2.8 2.8 h-6 l-2.8 -2.8 z" fill="#1f3f92" stroke="#1c1c1c" stroke-width="0.7"/><rect x="602.50" y="208.20" width="7.6" height="2.6" fill="#cdc8b6"/><text x="628.96" y="187.30" font-size="12.4" text-anchor="middle" fill="#1a1a1a" font-family="Liberation Sans">3</text><text x="628.96" y="228.00" font-size="12.4" text-anchor="middle" fill="#1a1a1a" font-family="Liberation Sans">4</text><path d="M623.16 200.80 h11.6 v-7.8 l-2.8 -2.8 h-6 l-2.8 2.8 z" fill="#1f3f92" stroke="#1c1c1c" stroke-width="0.7"/><rect x="625.16" y="197.50" width="7.6" height="2.6" fill="#cdc8b6"/><path d="M623.16 207.50 h11.6 v7.8 l-2.8 2.8 h-6 l-2.8 -2.8 z" fill="#1f3f92" stroke="#1c1c1c" stroke-width="0.7"/><rect x="625.16" y="208.20" width="7.6" height="2.6" fill="#cdc8b6"/><text x="651.62" y="187.30" font-size="12.4" text-anchor="middle" fill="#1a1a1a" font-family="Liberation Sans">5</text><text x="651.62" y="228.00" font-size="12.4" text-anchor="middle" fill="#1a1a1a" font-family="Liberation Sans">6</text><path d="M645.82 200.80 h11.6 v-7.8 l-2.8 -2.8 h-6 l-2.8 2.8 z" fill="#1f3f92" stroke="#1c1c1c" stroke-width="0.7"/><rect x="647.82" y="197.50" width="7.6" height="2.6" fill="#cdc8b6"/><path d="M645.82 207.50 h11.6 v7.8 l-2.8 2.8 h-6 l-2.8 -2.8 z" fill="#1f3f92" stroke="#1c1c1c" stroke-width="0.7"/><rect x="647.82" y="208.20" width="7.6" height="2.6" fill="#cdc8b6"/><text x="674.28" y="187.30" font-size="12.4" text-anchor="middle" fill="#1a1a1a" font-family="Liberation Sans">7</text><text x="674.28" y="228.00" font-size="12.4" text-anchor="middle" fill="#1a1a1a" font-family="Liberation Sans">8</text><path d="M668.48 200.80 h11.6 v-7.8 l-2.8 -2.8 h-6 l-2.8 2.8 z" fill="#1f3f92" stroke="#1c1c1c" stroke-width="0.7"/><rect x="670.48" y="197.50" width="7.6" height="2.6" fill="#cdc8b6"/><path d="M668.48 207.50 h11.6 v7.8 l-2.8 2.8 h-6 l-2.8 -2.8 z" fill="#1f3f92" stroke="#1c1c1c" stroke-width="0.7"/><rect x="670.48" y="208.20" width="7.6" height="2.6" fill="#cdc8b6"/><text x="696.94" y="187.30" font-size="12.4" text-anchor="middle" fill="#1a1a1a" font-family="Liberation Sans">9</text><text x="696.94" y="228.00" font-size="12.4" text-anchor="middle" fill="#1a1a1a" font-family="Liberation Sans">10</text><path d="M691.14 200.80 h11.6 v-7.8 l-2.8 -2.8 h-6 l-2.8 2.8 z" fill="#1f3f92" stroke="#1c1c1c" stroke-width="0.7"/><rect x="693.14" y="197.50" width="7.6" height="2.6" fill="#cdc8b6"/><path d="M691.14 207.50 h11.6 v7.8 l-2.8 2.8 h-6 l-2.8 -2.8 z" fill="#1f3f92" stroke="#1c1c1c" stroke-width="0.7"/><rect x="693.14" y="208.20" width="7.6" height="2.6" fill="#cdc8b6"/><text x="719.60" y="187.30" font-size="12.4" text-anchor="middle" fill="#1a1a1a" font-family="Liberation Sans">11</text><text x="719.60" y="228.00" font-size="12.4" text-anchor="middle" fill="#1a1a1a" font-family="Liberation Sans">12</text><path d="M713.80 200.80 h11.6 v-7.8 l-2.8 -2.8 h-6 l-2.8 2.8 z" fill="#1f3f92" stroke="#1c1c1c" stroke-width="0.7"/><rect x="715.80" y="197.50" width="7.6" height="2.6" fill="#cdc8b6"/><path d="M713.80 207.50 h11.6 v7.8 l-2.8 2.8 h-6 l-2.8 -2.8 z" fill="#1f3f92" stroke="#1c1c1c" stroke-width="0.7"/><rect x="715.80" y="208.20" width="7.6" height="2.6" fill="#cdc8b6"/><text x="750.20" y="187.30" font-size="12.4" text-anchor="middle" fill="#1a1a1a" font-family="Liberation Sans">13</text><text x="750.20" y="228.00" font-size="12.4" text-anchor="middle" fill="#1a1a1a" font-family="Liberation Sans">14</text><path d="M744.40 200.80 h11.6 v-7.8 l-2.8 -2.8 h-6 l-2.8 2.8 z" fill="#1f3f92" stroke="#1c1c1c" stroke-width="0.7"/><rect x="746.40" y="197.50" width="7.6" height="2.6" fill="#cdc8b6"/><path d="M744.40 207.50 h11.6 v7.8 l-2.8 2.8 h-6 l-2.8 -2.8 z" fill="#1f3f92" stroke="#1c1c1c" stroke-width="0.7"/><rect x="746.40" y="208.20" width="7.6" height="2.6" fill="#cdc8b6"/><text x="772.86" y="187.30" font-size="12.4" text-anchor="middle" fill="#1a1a1a" font-family="Liberation Sans">15</text><text x="772.86" y="228.00" font-size="12.4" text-anchor="middle" fill="#1a1a1a" font-family="Liberation Sans">16</text><path d="M767.06 200.80 h11.6 v-7.8 l-2.8 -2.8 h-6 l-2.8 2.8 z" fill="#1f3f92" stroke="#1c1c1c" stroke-width="0.7"/><rect x="769.06" y="197.50" width="7.6" height="2.6" fill="#cdc8b6"/><path d="M767.06 207.50 h11.6 v7.8 l-2.8 2.8 h-6 l-2.8 -2.8 z" fill="#1f3f92" stroke="#1c1c1c" stroke-width="0.7"/><rect x="769.06" y="208.20" width="7.6" height="2.6" fill="#cdc8b6"/><text x="795.52" y="187.30" font-size="12.4" text-anchor="middle" fill="#1a1a1a" font-family="Liberation Sans">17</text><text x="795.52" y="228.00" font-size="12.4" text-anchor="middle" fill="#1a1a1a" font-family="Liberation Sans">18</text><path d="M789.72 200.80 h11.6 v-7.8 l-2.8 -2.8 h-6 l-2.8 2.8 z" fill="#1f3f92" stroke="#1c1c1c" stroke-width="0.7"/><rect x="791.72" y="197.50" width="7.6" height="2.6" fill="#cdc8b6"/><path d="M789.72 207.50 h11.6 v7.8 l-2.8 2.8 h-6 l-2.8 -2.8 z" fill="#1f3f92" stroke="#1c1c1c" stroke-width="0.7"/><rect x="791.72" y="208.20" width="7.6" height="2.6" fill="#cdc8b6"/><text x="818.18" y="187.30" font-size="12.4" text-anchor="middle" fill="#1a1a1a" font-family="Liberation Sans">19</text><text x="818.18" y="228.00" font-size="12.4" text-anchor="middle" fill="#1a1a1a" font-family="Liberation Sans">20</text><path d="M812.38 200.80 h11.6 v-7.8 l-2.8 -2.8 h-6 l-2.8 2.8 z" fill="#1f3f92" stroke="#1c1c1c" stroke-width="0.7"/><rect x="814.38" y="197.50" width="7.6" height="2.6" fill="#cdc8b6"/><path d="M812.38 207.50 h11.6 v7.8 l-2.8 2.8 h-6 l-2.8 -2.8 z" fill="#1f3f92" stroke="#1c1c1c" stroke-width="0.7"/><rect x="814.38" y="208.20" width="7.6" height="2.6" fill="#cdc8b6"/><text x="840.84" y="187.30" font-size="12.4" text-anchor="middle" fill="#1a1a1a" font-family="Liberation Sans">21</text><text x="840.84" y="228.00" font-size="12.4" text-anchor="middle" fill="#1a1a1a" font-family="Liberation Sans">22</text><path d="M835.04 200.80 h11.6 v-7.8 l-2.8 -2.8 h-6 l-2.8 2.8 z" fill="#1f3f92" stroke="#1c1c1c" stroke-width="0.7"/><rect x="837.04" y="197.50" width="7.6" height="2.6" fill="#cdc8b6"/><path d="M835.04 207.50 h11.6 v7.8 l-2.8 2.8 h-6 l-2.8 -2.8 z" fill="#1f3f92" stroke="#1c1c1c" stroke-width="0.7"/><rect x="837.04" y="208.20" width="7.6" height="2.6" fill="#cdc8b6"/><text x="863.50" y="187.30" font-size="12.4" text-anchor="middle" fill="#1a1a1a" font-family="Liberation Sans">23</text><text x="863.50" y="228.00" font-size="12.4" text-anchor="middle" fill="#1a1a1a" font-family="Liberation Sans">24</text><path d="M857.70 200.80 h11.6 v-7.8 l-2.8 -2.8 h-6 l-2.8 2.8 z" fill="#0a7f0a" stroke="#1c1c1c" stroke-width="0.7"/><rect x="859.70" y="197.50" width="7.6" height="2.6" fill="#cdc8b6"/><path d="M857.70 207.50 h11.6 v7.8 l-2.8 2.8 h-6 l-2.8 -2.8 z" fill="#1f3f92" stroke="#1c1c1c" stroke-width="0.7"/><rect x="859.70" y="208.20" width="7.6" height="2.6" fill="#cdc8b6"/><text x="894.10" y="187.30" font-size="12.4" text-anchor="middle" fill="#1a1a1a" font-family="Liberation Sans">25</text><text x="894.10" y="228.00" font-size="12.4" text-anchor="middle" fill="#1a1a1a" font-family="Liberation Sans">26</text><path d="M888.30 200.80 h11.6 v-7.8 l-2.8 -2.8 h-6 l-2.8 2.8 z" fill="#1f3f92" stroke="#1c1c1c" stroke-width="0.7"/><rect x="890.30" y="197.50" width="7.6" height="2.6" fill="#cdc8b6"/><path d="M888.30 207.50 h11.6 v7.8 l-2.8 2.8 h-6 l-2.8 -2.8 z" fill="#1f3f92" stroke="#1c1c1c" stroke-width="0.7"/><rect x="890.30" y="208.20" width="7.6" height="2.6" fill="#cdc8b6"/><text x="916.76" y="187.30" font-size="12.4" text-anchor="middle" fill="#1a1a1a" font-family="Liberation Sans">27</text><text x="916.76" y="228.00" font-size="12.4" text-anchor="middle" fill="#1a1a1a" font-family="Liberation Sans">28</text><path d="M910.96 200.80 h11.6 v-7.8 l-2.8 -2.8 h-6 l-2.8 2.8 z" fill="#1f3f92" stroke="#1c1c1c" stroke-width="0.7"/><rect x="912.96" y="197.50" width="7.6" height="2.6" fill="#cdc8b6"/><path d="M910.96 207.50 h11.6 v7.8 l-2.8 2.8 h-6 l-2.8 -2.8 z" fill="#1f3f92" stroke="#1c1c1c" stroke-width="0.7"/><rect x="912.96" y="208.20" width="7.6" height="2.6" fill="#cdc8b6"/><text x="939.42" y="187.30" font-size="12.4" text-anchor="middle" fill="#1a1a1a" font-family="Liberation Sans">29</text><text x="939.42" y="228.00" font-size="12.4" text-anchor="middle" fill="#1a1a1a" font-family="Liberation Sans">30</text><path d="M933.62 200.80 h11.6 v-7.8 l-2.8 -2.8 h-6 l-2.8 2.8 z" fill="#1f3f92" stroke="#1c1c1c" stroke-width="0.7"/><rect x="935.62" y="197.50" width="7.6" height="2.6" fill="#cdc8b6"/><path d="M933.62 207.50 h11.6 v7.8 l-2.8 2.8 h-6 l-2.8 -2.8 z" fill="#1f3f92" stroke="#1c1c1c" stroke-width="0.7"/><rect x="935.62" y="208.20" width="7.6" height="2.6" fill="#cdc8b6"/><text x="962.08" y="187.30" font-size="12.4" text-anchor="middle" fill="#1a1a1a" font-family="Liberation Sans">31</text><text x="962.08" y="228.00" font-size="12.4" text-anchor="middle" fill="#1a1a1a" font-family="Liberation Sans">32</text><path d="M956.28 200.80 h11.6 v-7.8 l-2.8 -2.8 h-6 l-2.8 2.8 z" fill="#1f3f92" stroke="#1c1c1c" stroke-width="0.7"/><rect x="958.28" y="197.50" width="7.6" height="2.6" fill="#cdc8b6"/><path d="M956.28 207.50 h11.6 v7.8 l-2.8 2.8 h-6 l-2.8 -2.8 z" fill="#1f3f92" stroke="#1c1c1c" stroke-width="0.7"/><rect x="958.28" y="208.20" width="7.6" height="2.6" fill="#cdc8b6"/><text x="984.74" y="187.30" font-size="12.4" text-anchor="middle" fill="#1a1a1a" font-family="Liberation Sans">33</text><text x="984.74" y="228.00" font-size="12.4" text-anchor="middle" fill="#1a1a1a" font-family="Liberation Sans">34</text><path d="M978.94 200.80 h11.6 v-7.8 l-2.8 -2.8 h-6 l-2.8 2.8 z" fill="#1f3f92" stroke="#1c1c1c" stroke-width="0.7"/><rect x="980.94" y="197.50" width="7.6" height="2.6" fill="#cdc8b6"/><path d="M978.94 207.50 h11.6 v7.8 l-2.8 2.8 h-6 l-2.8 -2.8 z" fill="#1f3f92" stroke="#1c1c1c" stroke-width="0.7"/><rect x="980.94" y="208.20" width="7.6" height="2.6" fill="#cdc8b6"/><text x="1007.40" y="187.30" font-size="12.4" text-anchor="middle" fill="#1a1a1a" font-family="Liberation Sans">35</text><text x="1007.40" y="228.00" font-size="12.4" text-anchor="middle" fill="#1a1a1a" font-family="Liberation Sans">36</text><path d="M1001.60 200.80 h11.6 v-7.8 l-2.8 -2.8 h-6 l-2.8 2.8 z" fill="#1f3f92" stroke="#1c1c1c" stroke-width="0.7"/><rect x="1003.60" y="197.50" width="7.6" height="2.6" fill="#cdc8b6"/><path d="M1001.60 207.50 h11.6 v7.8 l-2.8 2.8 h-6 l-2.8 -2.8 z" fill="#1f3f92" stroke="#1c1c1c" stroke-width="0.7"/><rect x="1003.60" y="208.20" width="7.6" height="2.6" fill="#cdc8b6"/><text x="1038.00" y="187.30" font-size="12.4" text-anchor="middle" fill="#1a1a1a" font-family="Liberation Sans">37</text><text x="1038.00" y="228.00" font-size="12.4" text-anchor="middle" fill="#1a1a1a" font-family="Liberation Sans">38</text><path d="M1032.20 200.80 h11.6 v-7.8 l-2.8 -2.8 h-6 l-2.8 2.8 z" fill="#1f3f92" stroke="#1c1c1c" stroke-width="0.7"/><rect x="1034.20" y="197.50" width="7.6" height="2.6" fill="#cdc8b6"/><path d="M1032.20 207.50 h11.6 v7.8 l-2.8 2.8 h-6 l-2.8 -2.8 z" fill="#1f3f92" stroke="#1c1c1c" stroke-width="0.7"/><rect x="1034.20" y="208.20" width="7.6" height="2.6" fill="#cdc8b6"/><text x="1060.66" y="187.30" font-size="12.4" text-anchor="middle" fill="#1a1a1a" font-family="Liberation Sans">39</text><text x="1060.66" y="228.00" font-size="12.4" text-anchor="middle" fill="#1a1a1a" font-family="Liberation Sans">40</text><path d="M1054.86 200.80 h11.6 v-7.8 l-2.8 -2.8 h-6 l-2.8 2.8 z" fill="#1f3f92" stroke="#1c1c1c" stroke-width="0.7"/><rect x="1056.86" y="197.50" width="7.6" height="2.6" fill="#cdc8b6"/><path d="M1054.86 207.50 h11.6 v7.8 l-2.8 2.8 h-6 l-2.8 -2.8 z" fill="#1f3f92" stroke="#1c1c1c" stroke-width="0.7"/><rect x="1056.86" y="208.20" width="7.6" height="2.6" fill="#cdc8b6"/><text x="1083.32" y="187.30" font-size="12.4" text-anchor="middle" fill="#1a1a1a" font-family="Liberation Sans">41</text><text x="1083.32" y="228.00" font-size="12.4" text-anchor="middle" fill="#1a1a1a" font-family="Liberation Sans">42</text><path d="M1077.52 200.80 h11.6 v-7.8 l-2.8 -2.8 h-6 l-2.8 2.8 z" fill="#1f3f92" stroke="#1c1c1c" stroke-width="0.7"/><rect x="1079.52" y="197.50" width="7.6" height="2.6" fill="#cdc8b6"/><path d="M1077.52 207.50 h11.6 v7.8 l-2.8 2.8 h-6 l-2.8 -2.8 z" fill="#1f3f92" stroke="#1c1c1c" stroke-width="0.7"/><rect x="1079.52" y="208.20" width="7.6" height="2.6" fill="#cdc8b6"/><text x="1105.98" y="187.30" font-size="12.4" text-anchor="middle" fill="#1a1a1a" font-family="Liberation Sans">43</text><text x="1105.98" y="228.00" font-size="12.4" text-anchor="middle" fill="#1a1a1a" font-family="Liberation Sans">44</text><path d="M1100.18 200.80 h11.6 v-7.8 l-2.8 -2.8 h-6 l-2.8 2.8 z" fill="#1f3f92" stroke="#1c1c1c" stroke-width="0.7"/><rect x="1102.18" y="197.50" width="7.6" height="2.6" fill="#cdc8b6"/><path d="M1100.18 207.50 h11.6 v7.8 l-2.8 2.8 h-6 l-2.8 -2.8 z" fill="#1f3f92" stroke="#1c1c1c" stroke-width="0.7"/><rect x="1102.18" y="208.20" width="7.6" height="2.6" fill="#cdc8b6"/><text x="1128.64" y="187.30" font-size="12.4" text-anchor="middle" fill="#1a1a1a" font-family="Liberation Sans">45</text><text x="1128.64" y="228.00" font-size="12.4" text-anchor="middle" fill="#1a1a1a" font-family="Liberation Sans">46</text><path d="M1122.84 200.80 h11.6 v-7.8 l-2.8 -2.8 h-6 l-2.8 2.8 z" fill="#1f3f92" stroke="#1c1c1c" stroke-width="0.7"/><rect x="1124.84" y="197.50" width="7.6" height="2.6" fill="#cdc8b6"/><path d="M1122.84 207.50 h11.6 v7.8 l-2.8 2.8 h-6 l-2.8 -2.8 z" fill="#1f3f92" stroke="#1c1c1c" stroke-width="0.7"/><rect x="1124.84" y="208.20" width="7.6" height="2.6" fill="#cdc8b6"/><text x="1151.30" y="187.30" font-size="12.4" text-anchor="middle" fill="#1a1a1a" font-family="Liberation Sans">47</text><text x="1151.30" y="228.00" font-size="12.4" text-anchor="middle" fill="#1a1a1a" font-family="Liberation Sans">48</text><path d="M1145.50 200.80 h11.6 v-7.8 l-2.8 -2.8 h-6 l-2.8 2.8 z" fill="#1f3f92" stroke="#1c1c1c" stroke-width="0.7"/><rect x="1147.50" y="197.50" width="7.6" height="2.6" fill="#cdc8b6"/><path d="M1145.50 207.50 h11.6 v7.8 l-2.8 2.8 h-6 l-2.8 -2.8 z" fill="#1f3f92" stroke="#1c1c1c" stroke-width="0.7"/><rect x="1147.50" y="208.20" width="7.6" height="2.6" fill="#cdc8b6"/><text x="1199.50" y="183.20" font-size="12.3" text-anchor="middle" fill="#1a1a1a" font-family="Liberation Sans">Console 1</text><text x="1254.00" y="183.20" font-size="12.3" text-anchor="middle" fill="#1a1a1a" font-family="Liberation Sans">USB 1</text><rect x="1246" y="188.50" width="16" height="6" fill="#1f3f92" stroke="#111" stroke-width="0.8"/><rect x="1248" y="190.80" width="12" height="1.2" fill="#9fb0e0"/><rect x="1196" y="187.50" width="3" height="1.5" fill="#777"/><text x="1191" y="205.00" font-size="12.3" text-anchor="middle" fill="#1a1a1a" font-family="Liberation Sans">49</text><text x="1214" y="205.00" font-size="12.3" text-anchor="middle" fill="#1a1a1a" font-family="Liberation Sans">50</text><rect x="1180.5" y="205.20" width="21.5" height="13" fill="#e6e6e6" stroke="#cfcfcf" stroke-width="0.8"/><rect x="1202.5" y="205.20" width="21.5" height="13" fill="#e6e6e6" stroke="#cfcfcf" stroke-width="0.8"/><rect x="1224.5" y="205.20" width="21.5" height="13" fill="#e6e6e6" stroke="#cfcfcf" stroke-width="0.8"/><rect x="1246.5" y="205.20" width="21.5" height="13" fill="#e6e6e6" stroke="#cfcfcf" stroke-width="0.8"/><rect x="1186.00" y="209.50" width="5" height="7" rx="1.5" fill="#5a5a5a"/><rect x="1186.80" y="209.30" width="3.4" height="3" rx="1.2" fill="#1a9a1a"/><rect x="1192.00" y="209.50" width="5" height="7" rx="1.5" fill="#5a5a5a"/><rect x="1192.80" y="209.30" width="3.4" height="3" rx="1.2" fill="#1a9a1a"/><rect x="1208.00" y="209.50" width="5" height="7" rx="1.5" fill="#5a5a5a"/><rect x="1208.80" y="209.30" width="3.4" height="3" rx="1.2" fill="#1a9a1a"/><rect x="1214.00" y="209.50" width="5" height="7" rx="1.5" fill="#5a5a5a"/><rect x="1214.80" y="209.30" width="3.4" height="3" rx="1.2" fill="#1a9a1a"/></svg>
<div style="position:absolute;left:540px;top:230.97px;width:786px;height:143.07px;background:#b9babf"></div>
<div style="position:absolute;left:548px;top:230.97px;width:770px;height:141.37px;background:#f8fafc"></div>
<div style="position:absolute;left:549px;top:231.27px;width:767px;height:12.6px;background:linear-gradient(to bottom,#d8e6f5 0px,#8ab4e2 1px,#93b6e0 45%,#93acc9 70%,#8f9aa8 90%,#8e9299 100%)"></div>
<div style="position:absolute;left:549px;top:245.07px;width:767px;height:125.97px;background:linear-gradient(170deg,#f0f3f6 0%,#e9edf2 100%)"></div>
<div class="t" style="left:552.5px;top:231.57px;height:13px;line-height:13px;font-size:9.3px;color:#f4f7fb;font-weight:400;">Rangierpanel</div>
<div class="t" style="left:1091.30px;width:400px;text-align:center;top:230.97px;height:16px;line-height:16px;font-size:11.2px;color:#eef2f8;font-weight:400;">V</div>
<div class="t" style="left:1106.70px;width:400px;text-align:center;top:230.97px;height:16px;line-height:16px;font-size:11.2px;color:#eef2f8;font-weight:400;">H</div>
<svg style="left:0;top:0" width="1" height="1"><text transform="translate(933 336.5) scale(0.957 1)" x="0" y="0" font-size="66.8" text-anchor="middle" fill="#bfc2c7" font-family="Liberation Sans">Rangierpanel</text></svg>
<div style="position:absolute;left:540px;top:374.63px;width:786px;height:71.23px;background:#b9babf"></div>
<div style="position:absolute;left:548px;top:374.63px;width:770px;height:69.53px;background:#f8fafc"></div>
<div style="position:absolute;left:549px;top:374.93px;width:767px;height:12.6px;background:linear-gradient(to bottom,#d8e6f5 0px,#8ab4e2 1px,#93b6e0 45%,#93acc9 70%,#8f9aa8 90%,#8e9299 100%)"></div>
<div style="position:absolute;left:549px;top:388.73px;width:767px;height:54.13px;background:linear-gradient(170deg,#f0f3f6 0%,#e9edf2 100%)"></div>
<div class="t" style="left:552.5px;top:375.23px;height:13px;line-height:13px;font-size:9.3px;color:#f4f7fb;font-weight:400;">PFC-33</div>
<div class="t" style="left:1097.00px;width:400px;text-align:center;top:375.03px;height:13px;line-height:13px;font-size:9.6px;color:#eef2f8;font-weight:400;">V</div>
<div class="t" style="left:1108.70px;width:400px;text-align:center;top:375.03px;height:13px;line-height:13px;font-size:9.6px;color:#eef2f8;font-weight:400;">H</div>
<svg style="left:0;top:0" width="1" height="1"><text x="578.00" y="411.90" font-size="12.5" text-anchor="middle" fill="#1a1a1a" font-family="Liberation Sans">1</text><path d="M572.20 414.30 h11.6 v7.8 l-2.8 2.8 h-6 l-2.8 -2.8 z" fill="#0a7f0a" stroke="#1c1c1c" stroke-width="0.7"/><rect x="574.20" y="415.00" width="7.6" height="2.6" fill="#cdc8b6"/><text x="608.38" y="411.90" font-size="12.5" text-anchor="middle" fill="#1a1a1a" font-family="Liberation Sans">2</text><path d="M602.58 414.30 h11.6 v7.8 l-2.8 2.8 h-6 l-2.8 -2.8 z" fill="#1f3f92" stroke="#1c1c1c" stroke-width="0.7"/><rect x="604.58" y="415.00" width="7.6" height="2.6" fill="#cdc8b6"/><text x="638.75" y="411.90" font-size="12.5" text-anchor="middle" fill="#1a1a1a" font-family="Liberation Sans">3</text><path d="M632.95 414.30 h11.6 v7.8 l-2.8 2.8 h-6 l-2.8 -2.8 z" fill="#0a7f0a" stroke="#1c1c1c" stroke-width="0.7"/><rect x="634.95" y="415.00" width="7.6" height="2.6" fill="#cdc8b6"/><text x="669.12" y="411.90" font-size="12.5" text-anchor="middle" fill="#1a1a1a" font-family="Liberation Sans">4</text><path d="M663.33 414.30 h11.6 v7.8 l-2.8 2.8 h-6 l-2.8 -2.8 z" fill="#1f3f92" stroke="#1c1c1c" stroke-width="0.7"/><rect x="665.33" y="415.00" width="7.6" height="2.6" fill="#cdc8b6"/><text x="699.50" y="411.90" font-size="12.5" text-anchor="middle" fill="#1a1a1a" font-family="Liberation Sans">5</text><path d="M693.70 414.30 h11.6 v7.8 l-2.8 2.8 h-6 l-2.8 -2.8 z" fill="#0a7f0a" stroke="#1c1c1c" stroke-width="0.7"/><rect x="695.70" y="415.00" width="7.6" height="2.6" fill="#cdc8b6"/><text x="729.88" y="411.90" font-size="12.5" text-anchor="middle" fill="#1a1a1a" font-family="Liberation Sans">6</text><path d="M724.08 414.30 h11.6 v7.8 l-2.8 2.8 h-6 l-2.8 -2.8 z" fill="#1f3f92" stroke="#1c1c1c" stroke-width="0.7"/><rect x="726.08" y="415.00" width="7.6" height="2.6" fill="#cdc8b6"/><text x="760.25" y="411.90" font-size="12.5" text-anchor="middle" fill="#1a1a1a" font-family="Liberation Sans">7</text><path d="M754.45 414.30 h11.6 v7.8 l-2.8 2.8 h-6 l-2.8 -2.8 z" fill="#0a7f0a" stroke="#1c1c1c" stroke-width="0.7"/><rect x="756.45" y="415.00" width="7.6" height="2.6" fill="#cdc8b6"/><text x="790.62" y="411.90" font-size="12.5" text-anchor="middle" fill="#1a1a1a" font-family="Liberation Sans">8</text><path d="M784.83 414.30 h11.6 v7.8 l-2.8 2.8 h-6 l-2.8 -2.8 z" fill="#1f3f92" stroke="#1c1c1c" stroke-width="0.7"/><rect x="786.83" y="415.00" width="7.6" height="2.6" fill="#cdc8b6"/><text x="821.00" y="411.90" font-size="12.5" text-anchor="middle" fill="#1a1a1a" font-family="Liberation Sans">9</text><path d="M815.20 414.30 h11.6 v7.8 l-2.8 2.8 h-6 l-2.8 -2.8 z" fill="#0a7f0a" stroke="#1c1c1c" stroke-width="0.7"/><rect x="817.20" y="415.00" width="7.6" height="2.6" fill="#cdc8b6"/><text x="851.38" y="411.90" font-size="12.5" text-anchor="middle" fill="#1a1a1a" font-family="Liberation Sans">10</text><path d="M845.58 414.30 h11.6 v7.8 l-2.8 2.8 h-6 l-2.8 -2.8 z" fill="#1f3f92" stroke="#1c1c1c" stroke-width="0.7"/><rect x="847.58" y="415.00" width="7.6" height="2.6" fill="#cdc8b6"/><text x="881.75" y="411.90" font-size="12.5" text-anchor="middle" fill="#1a1a1a" font-family="Liberation Sans">11</text><path d="M875.95 414.30 h11.6 v7.8 l-2.8 2.8 h-6 l-2.8 -2.8 z" fill="#0a7f0a" stroke="#1c1c1c" stroke-width="0.7"/><rect x="877.95" y="415.00" width="7.6" height="2.6" fill="#cdc8b6"/><text x="912.12" y="411.90" font-size="12.5" text-anchor="middle" fill="#1a1a1a" font-family="Liberation Sans">12</text><path d="M906.33 414.30 h11.6 v7.8 l-2.8 2.8 h-6 l-2.8 -2.8 z" fill="#1f3f92" stroke="#1c1c1c" stroke-width="0.7"/><rect x="908.33" y="415.00" width="7.6" height="2.6" fill="#cdc8b6"/><text x="942.50" y="411.90" font-size="12.5" text-anchor="middle" fill="#1a1a1a" font-family="Liberation Sans">13</text><path d="M936.70 414.30 h11.6 v7.8 l-2.8 2.8 h-6 l-2.8 -2.8 z" fill="#0a7f0a" stroke="#1c1c1c" stroke-width="0.7"/><rect x="938.70" y="415.00" width="7.6" height="2.6" fill="#cdc8b6"/><text x="972.88" y="411.90" font-size="12.5" text-anchor="middle" fill="#1a1a1a" font-family="Liberation Sans">14</text><path d="M967.08 414.30 h11.6 v7.8 l-2.8 2.8 h-6 l-2.8 -2.8 z" fill="#1f3f92" stroke="#1c1c1c" stroke-width="0.7"/><rect x="969.08" y="415.00" width="7.6" height="2.6" fill="#cdc8b6"/><text x="1003.25" y="411.90" font-size="12.5" text-anchor="middle" fill="#1a1a1a" font-family="Liberation Sans">15</text><path d="M997.45 414.30 h11.6 v7.8 l-2.8 2.8 h-6 l-2.8 -2.8 z" fill="#0a7f0a" stroke="#1c1c1c" stroke-width="0.7"/><rect x="999.45" y="415.00" width="7.6" height="2.6" fill="#cdc8b6"/><text x="1033.62" y="411.90" font-size="12.5" text-anchor="middle" fill="#1a1a1a" font-family="Liberation Sans">16</text><path d="M1027.83 414.30 h11.6 v7.8 l-2.8 2.8 h-6 l-2.8 -2.8 z" fill="#1f3f92" stroke="#1c1c1c" stroke-width="0.7"/><rect x="1029.83" y="415.00" width="7.6" height="2.6" fill="#cdc8b6"/><text x="1064.00" y="411.90" font-size="12.5" text-anchor="middle" fill="#1a1a1a" font-family="Liberation Sans">17</text><path d="M1058.20 414.30 h11.6 v7.8 l-2.8 2.8 h-6 l-2.8 -2.8 z" fill="#0a7f0a" stroke="#1c1c1c" stroke-width="0.7"/><rect x="1060.20" y="415.00" width="7.6" height="2.6" fill="#cdc8b6"/><text x="1094.38" y="411.90" font-size="12.5" text-anchor="middle" fill="#1a1a1a" font-family="Liberation Sans">18</text><path d="M1088.58 414.30 h11.6 v7.8 l-2.8 2.8 h-6 l-2.8 -2.8 z" fill="#1f3f92" stroke="#1c1c1c" stroke-width="0.7"/><rect x="1090.58" y="415.00" width="7.6" height="2.6" fill="#cdc8b6"/><text x="1124.75" y="411.90" font-size="12.5" text-anchor="middle" fill="#1a1a1a" font-family="Liberation Sans">19</text><path d="M1118.95 414.30 h11.6 v7.8 l-2.8 2.8 h-6 l-2.8 -2.8 z" fill="#0a7f0a" stroke="#1c1c1c" stroke-width="0.7"/><rect x="1120.95" y="415.00" width="7.6" height="2.6" fill="#cdc8b6"/><text x="1155.12" y="411.90" font-size="12.5" text-anchor="middle" fill="#1a1a1a" font-family="Liberation Sans">20</text><path d="M1149.33 414.30 h11.6 v7.8 l-2.8 2.8 h-6 l-2.8 -2.8 z" fill="#1f3f92" stroke="#1c1c1c" stroke-width="0.7"/><rect x="1151.33" y="415.00" width="7.6" height="2.6" fill="#cdc8b6"/><text x="1185.50" y="411.90" font-size="12.5" text-anchor="middle" fill="#1a1a1a" font-family="Liberation Sans">21</text><path d="M1179.70 414.30 h11.6 v7.8 l-2.8 2.8 h-6 l-2.8 -2.8 z" fill="#0a7f0a" stroke="#1c1c1c" stroke-width="0.7"/><rect x="1181.70" y="415.00" width="7.6" height="2.6" fill="#cdc8b6"/><text x="1215.88" y="411.90" font-size="12.5" text-anchor="middle" fill="#1a1a1a" font-family="Liberation Sans">22</text><path d="M1210.08 414.30 h11.6 v7.8 l-2.8 2.8 h-6 l-2.8 -2.8 z" fill="#1f3f92" stroke="#1c1c1c" stroke-width="0.7"/><rect x="1212.08" y="415.00" width="7.6" height="2.6" fill="#cdc8b6"/><text x="1246.25" y="411.90" font-size="12.5" text-anchor="middle" fill="#1a1a1a" font-family="Liberation Sans">23</text><path d="M1240.45 414.30 h11.6 v7.8 l-2.8 2.8 h-6 l-2.8 -2.8 z" fill="#0a7f0a" stroke="#1c1c1c" stroke-width="0.7"/><rect x="1242.45" y="415.00" width="7.6" height="2.6" fill="#cdc8b6"/><text x="1276.62" y="411.90" font-size="12.5" text-anchor="middle" fill="#1a1a1a" font-family="Liberation Sans">24</text><path d="M1270.83 414.30 h11.6 v7.8 l-2.8 2.8 h-6 l-2.8 -2.8 z" fill="#1f3f92" stroke="#1c1c1c" stroke-width="0.7"/><rect x="1272.83" y="415.00" width="7.6" height="2.6" fill="#cdc8b6"/></svg>
<div style="position:absolute;left:540px;top:446.47px;width:786px;height:71.23px;background:#b9babf"></div>
<div style="position:absolute;left:548px;top:446.47px;width:770px;height:69.53px;background:#f8fafc"></div>
<div style="position:absolute;left:549px;top:446.77px;width:767px;height:12.6px;background:linear-gradient(to bottom,#d8e6f5 0px,#8ab4e2 1px,#93b6e0 45%,#93acc9 70%,#8f9aa8 90%,#8e9299 100%)"></div>
<div style="position:absolute;left:549px;top:460.57px;width:767px;height:54.13px;background:linear-gradient(170deg,#f0f3f6 0%,#e9edf2 100%)"></div>
<div class="t" style="left:552.5px;top:447.07px;height:13px;line-height:13px;font-size:9.3px;color:#f4f7fb;font-weight:400;">PFC-32</div>
<div class="t" style="left:1097.00px;width:400px;text-align:center;top:446.87px;height:13px;line-height:13px;font-size:9.6px;color:#eef2f8;font-weight:400;">V</div>
<div class="t" style="left:1108.70px;width:400px;text-align:center;top:446.87px;height:13px;line-height:13px;font-size:9.6px;color:#eef2f8;font-weight:400;">H</div>
<svg style="left:0;top:0" width="1" height="1"><text x="578.00" y="483.90" font-size="12.5" text-anchor="middle" fill="#1a1a1a" font-family="Liberation Sans">1</text><path d="M572.20 486.30 h11.6 v7.8 l-2.8 2.8 h-6 l-2.8 -2.8 z" fill="#0a7f0a" stroke="#1c1c1c" stroke-width="0.7"/><rect x="574.20" y="487.00" width="7.6" height="2.6" fill="#cdc8b6"/><text x="608.38" y="483.90" font-size="12.5" text-anchor="middle" fill="#1a1a1a" font-family="Liberation Sans">2</text><path d="M602.58 486.30 h11.6 v7.8 l-2.8 2.8 h-6 l-2.8 -2.8 z" fill="#474747" stroke="#1c1c1c" stroke-width="0.7"/><rect x="604.58" y="487.00" width="7.6" height="2.6" fill="#cdc8b6"/><text x="638.75" y="483.90" font-size="12.5" text-anchor="middle" fill="#1a1a1a" font-family="Liberation Sans">3</text><path d="M632.95 486.30 h11.6 v7.8 l-2.8 2.8 h-6 l-2.8 -2.8 z" fill="#474747" stroke="#1c1c1c" stroke-width="0.7"/><rect x="634.95" y="487.00" width="7.6" height="2.6" fill="#cdc8b6"/><text x="669.12" y="483.90" font-size="12.5" text-anchor="middle" fill="#1a1a1a" font-family="Liberation Sans">4</text><path d="M663.33 486.30 h11.6 v7.8 l-2.8 2.8 h-6 l-2.8 -2.8 z" fill="#474747" stroke="#1c1c1c" stroke-width="0.7"/><rect x="665.33" y="487.00" width="7.6" height="2.6" fill="#cdc8b6"/><text x="699.50" y="483.90" font-size="12.5" text-anchor="middle" fill="#1a1a1a" font-family="Liberation Sans">5</text><path d="M693.70 486.30 h11.6 v7.8 l-2.8 2.8 h-6 l-2.8 -2.8 z" fill="#474747" stroke="#1c1c1c" stroke-width="0.7"/><rect x="695.70" y="487.00" width="7.6" height="2.6" fill="#cdc8b6"/><text x="729.88" y="483.90" font-size="12.5" text-anchor="middle" fill="#1a1a1a" font-family="Liberation Sans">6</text><path d="M724.08 486.30 h11.6 v7.8 l-2.8 2.8 h-6 l-2.8 -2.8 z" fill="#474747" stroke="#1c1c1c" stroke-width="0.7"/><rect x="726.08" y="487.00" width="7.6" height="2.6" fill="#cdc8b6"/><text x="760.25" y="483.90" font-size="12.5" text-anchor="middle" fill="#1a1a1a" font-family="Liberation Sans">7</text><path d="M754.45 486.30 h11.6 v7.8 l-2.8 2.8 h-6 l-2.8 -2.8 z" fill="#474747" stroke="#1c1c1c" stroke-width="0.7"/><rect x="756.45" y="487.00" width="7.6" height="2.6" fill="#cdc8b6"/><text x="790.62" y="483.90" font-size="12.5" text-anchor="middle" fill="#1a1a1a" font-family="Liberation Sans">8</text><path d="M784.83 486.30 h11.6 v7.8 l-2.8 2.8 h-6 l-2.8 -2.8 z" fill="#474747" stroke="#1c1c1c" stroke-width="0.7"/><rect x="786.83" y="487.00" width="7.6" height="2.6" fill="#cdc8b6"/><text x="821.00" y="483.90" font-size="12.5" text-anchor="middle" fill="#1a1a1a" font-family="Liberation Sans">9</text><path d="M815.20 486.30 h11.6 v7.8 l-2.8 2.8 h-6 l-2.8 -2.8 z" fill="#474747" stroke="#1c1c1c" stroke-width="0.7"/><rect x="817.20" y="487.00" width="7.6" height="2.6" fill="#cdc8b6"/><text x="851.38" y="483.90" font-size="12.5" text-anchor="middle" fill="#1a1a1a" font-family="Liberation Sans">10</text><path d="M845.58 486.30 h11.6 v7.8 l-2.8 2.8 h-6 l-2.8 -2.8 z" fill="#474747" stroke="#1c1c1c" stroke-width="0.7"/><rect x="847.58" y="487.00" width="7.6" height="2.6" fill="#cdc8b6"/><text x="881.75" y="483.90" font-size="12.5" text-anchor="middle" fill="#1a1a1a" font-family="Liberation Sans">11</text><path d="M875.95 486.30 h11.6 v7.8 l-2.8 2.8 h-6 l-2.8 -2.8 z" fill="#474747" stroke="#1c1c1c" stroke-width="0.7"/><rect x="877.95" y="487.00" width="7.6" height="2.6" fill="#cdc8b6"/><text x="912.12" y="483.90" font-size="12.5" text-anchor="middle" fill="#1a1a1a" font-family="Liberation Sans">12</text><path d="M906.33 486.30 h11.6 v7.8 l-2.8 2.8 h-6 l-2.8 -2.8 z" fill="#474747" stroke="#1c1c1c" stroke-width="0.7"/><rect x="908.33" y="487.00" width="7.6" height="2.6" fill="#cdc8b6"/><text x="942.50" y="483.90" font-size="12.5" text-anchor="middle" fill="#1a1a1a" font-family="Liberation Sans">13</text><path d="M936.70 486.30 h11.6 v7.8 l-2.8 2.8 h-6 l-2.8 -2.8 z" fill="#474747" stroke="#1c1c1c" stroke-width="0.7"/><rect x="938.70" y="487.00" width="7.6" height="2.6" fill="#cdc8b6"/><text x="972.88" y="483.90" font-size="12.5" text-anchor="middle" fill="#1a1a1a" font-family="Liberation Sans">14</text><path d="M967.08 486.30 h11.6 v7.8 l-2.8 2.8 h-6 l-2.8 -2.8 z" fill="#474747" stroke="#1c1c1c" stroke-width="0.7"/><rect x="969.08" y="487.00" width="7.6" height="2.6" fill="#cdc8b6"/><text x="1003.25" y="483.90" font-size="12.5" text-anchor="middle" fill="#1a1a1a" font-family="Liberation Sans">15</text><path d="M997.45 486.30 h11.6 v7.8 l-2.8 2.8 h-6 l-2.8 -2.8 z" fill="#474747" stroke="#1c1c1c" stroke-width="0.7"/><rect x="999.45" y="487.00" width="7.6" height="2.6" fill="#cdc8b6"/><text x="1033.62" y="483.90" font-size="12.5" text-anchor="middle" fill="#1a1a1a" font-family="Liberation Sans">16</text><path d="M1027.83 486.30 h11.6 v7.8 l-2.8 2.8 h-6 l-2.8 -2.8 z" fill="#474747" stroke="#1c1c1c" stroke-width="0.7"/><rect x="1029.83" y="487.00" width="7.6" height="2.6" fill="#cdc8b6"/><text x="1064.00" y="483.90" font-size="12.5" text-anchor="middle" fill="#1a1a1a" font-family="Liberation Sans">17</text><path d="M1058.20 486.30 h11.6 v7.8 l-2.8 2.8 h-6 l-2.8 -2.8 z" fill="#474747" stroke="#1c1c1c" stroke-width="0.7"/><rect x="1060.20" y="487.00" width="7.6" height="2.6" fill="#cdc8b6"/><text x="1094.38" y="483.90" font-size="12.5" text-anchor="middle" fill="#1a1a1a" font-family="Liberation Sans">18</text><path d="M1088.58 486.30 h11.6 v7.8 l-2.8 2.8 h-6 l-2.8 -2.8 z" fill="#474747" stroke="#1c1c1c" stroke-width="0.7"/><rect x="1090.58" y="487.00" width="7.6" height="2.6" fill="#cdc8b6"/><text x="1124.75" y="483.90" font-size="12.5" text-anchor="middle" fill="#1a1a1a" font-family="Liberation Sans">19</text><path d="M1118.95 486.30 h11.6 v7.8 l-2.8 2.8 h-6 l-2.8 -2.8 z" fill="#474747" stroke="#1c1c1c" stroke-width="0.7"/><rect x="1120.95" y="487.00" width="7.6" height="2.6" fill="#cdc8b6"/><text x="1155.12" y="483.90" font-size="12.5" text-anchor="middle" fill="#1a1a1a" font-family="Liberation Sans">20</text><path d="M1149.33 486.30 h11.6 v7.8 l-2.8 2.8 h-6 l-2.8 -2.8 z" fill="#474747" stroke="#1c1c1c" stroke-width="0.7"/><rect x="1151.33" y="487.00" width="7.6" height="2.6" fill="#cdc8b6"/><text x="1185.50" y="483.90" font-size="12.5" text-anchor="middle" fill="#1a1a1a" font-family="Liberation Sans">21</text><path d="M1179.70 486.30 h11.6 v7.8 l-2.8 2.8 h-6 l-2.8 -2.8 z" fill="#474747" stroke="#1c1c1c" stroke-width="0.7"/><rect x="1181.70" y="487.00" width="7.6" height="2.6" fill="#cdc8b6"/><text x="1215.88" y="483.90" font-size="12.5" text-anchor="middle" fill="#1a1a1a" font-family="Liberation Sans">22</text><path d="M1210.08 486.30 h11.6 v7.8 l-2.8 2.8 h-6 l-2.8 -2.8 z" fill="#474747" stroke="#1c1c1c" stroke-width="0.7"/><rect x="1212.08" y="487.00" width="7.6" height="2.6" fill="#cdc8b6"/><text x="1246.25" y="483.90" font-size="12.5" text-anchor="middle" fill="#1a1a1a" font-family="Liberation Sans">23</text><path d="M1240.45 486.30 h11.6 v7.8 l-2.8 2.8 h-6 l-2.8 -2.8 z" fill="#474747" stroke="#1c1c1c" stroke-width="0.7"/><rect x="1242.45" y="487.00" width="7.6" height="2.6" fill="#cdc8b6"/><text x="1276.62" y="483.90" font-size="12.5" text-anchor="middle" fill="#1a1a1a" font-family="Liberation Sans">24</text><path d="M1270.83 486.30 h11.6 v7.8 l-2.8 2.8 h-6 l-2.8 -2.8 z" fill="#474747" stroke="#1c1c1c" stroke-width="0.7"/><rect x="1272.83" y="487.00" width="7.6" height="2.6" fill="#cdc8b6"/></svg>
<div style="position:absolute;left:540px;top:518.3px;width:786px;height:71.23px;background:#b9babf"></div>
<div style="position:absolute;left:548px;top:518.3px;width:770px;height:69.53px;background:#f8fafc"></div>
<div style="position:absolute;left:549px;top:518.6px;width:767px;height:12.6px;background:linear-gradient(to bottom,#d8e6f5 0px,#8ab4e2 1px,#93b6e0 45%,#93acc9 70%,#8f9aa8 90%,#8e9299 100%)"></div>
<div style="position:absolute;left:549px;top:532.4px;width:767px;height:54.13px;background:linear-gradient(170deg,#f0f3f6 0%,#e9edf2 100%)"></div>
<div class="t" style="left:552.5px;top:518.90px;height:13px;line-height:13px;font-size:9.3px;color:#f4f7fb;font-weight:400;">Blindpanel</div>
<div class="t" style="left:1097.00px;width:400px;text-align:center;top:518.70px;height:13px;line-height:13px;font-size:9.6px;color:#eef2f8;font-weight:400;">V</div>
<div class="t" style="left:1108.70px;width:400px;text-align:center;top:518.70px;height:13px;line-height:13px;font-size:9.6px;color:#eef2f8;font-weight:400;">H</div>
<svg style="left:0;top:0" width="1" height="1"><text transform="translate(933 578.3) scale(0.967 1)" x="0" y="0" font-size="43" text-anchor="middle" fill="#bfc2c7" font-family="Liberation Sans">Blindpanel</text></svg>
<div style="position:absolute;left:540px;top:590.13px;width:786px;height:71.23px;background:#b9babf"></div>
<div style="position:absolute;left:548px;top:590.13px;width:770px;height:69.53px;background:#f8fafc"></div>
<div style="position:absolute;left:549px;top:590.43px;width:767px;height:12.6px;background:linear-gradient(to bottom,#d8e6f5 0px,#8ab4e2 1px,#93b6e0 45%,#93acc9 70%,#8f9aa8 90%,#8e9299 100%)"></div>
<div style="position:absolute;left:549px;top:604.23px;width:767px;height:54.13px;background:linear-gradient(170deg,#d8e6d5 0%,#c9dcc5 50%,#b9d1b4 100%)"></div>
<div class="t" style="left:552.5px;top:590.73px;height:13px;line-height:13px;font-size:9.3px;color:#f4f7fb;font-weight:400;">PFC-30</div>
<div class="t" style="left:1097.00px;width:400px;text-align:center;top:590.53px;height:13px;line-height:13px;font-size:9.6px;color:#eef2f8;font-weight:400;">V</div>
<div class="t" style="left:1108.70px;width:400px;text-align:center;top:590.53px;height:13px;line-height:13px;font-size:9.6px;color:#eef2f8;font-weight:400;">H</div>
<svg style="left:0;top:0" width="1" height="1"><text x="627.00" y="631.50" font-size="12.5" text-anchor="middle" fill="#1a1a1a" font-family="Liberation Sans">1</text><path d="M621.20 633.90 h11.6 v7.8 l-2.8 2.8 h-6 l-2.8 -2.8 z" fill="#0a7f0a" stroke="#1c1c1c" stroke-width="0.7"/><rect x="623.20" y="634.60" width="7.6" height="2.6" fill="#cdc8b6"/><text x="652.15" y="631.50" font-size="12.5" text-anchor="middle" fill="#1a1a1a" font-family="Liberation Sans">2</text><path d="M646.35 633.90 h11.6 v7.8 l-2.8 2.8 h-6 l-2.8 -2.8 z" fill="#1f3f92" stroke="#1c1c1c" stroke-width="0.7"/><rect x="648.35" y="634.60" width="7.6" height="2.6" fill="#cdc8b6"/><text x="677.30" y="631.50" font-size="12.5" text-anchor="middle" fill="#1a1a1a" font-family="Liberation Sans">3</text><path d="M671.50 633.90 h11.6 v7.8 l-2.8 2.8 h-6 l-2.8 -2.8 z" fill="#0a7f0a" stroke="#1c1c1c" stroke-width="0.7"/><rect x="673.50" y="634.60" width="7.6" height="2.6" fill="#cdc8b6"/><text x="702.45" y="631.50" font-size="12.5" text-anchor="middle" fill="#1a1a1a" font-family="Liberation Sans">4</text><path d="M696.65 633.90 h11.6 v7.8 l-2.8 2.8 h-6 l-2.8 -2.8 z" fill="#1f3f92" stroke="#1c1c1c" stroke-width="0.7"/><rect x="698.65" y="634.60" width="7.6" height="2.6" fill="#cdc8b6"/><text x="727.60" y="631.50" font-size="12.5" text-anchor="middle" fill="#1a1a1a" font-family="Liberation Sans">5</text><path d="M721.80 633.90 h11.6 v7.8 l-2.8 2.8 h-6 l-2.8 -2.8 z" fill="#0a7f0a" stroke="#1c1c1c" stroke-width="0.7"/><rect x="723.80" y="634.60" width="7.6" height="2.6" fill="#cdc8b6"/><text x="752.75" y="631.50" font-size="12.5" text-anchor="middle" fill="#1a1a1a" font-family="Liberation Sans">6</text><path d="M746.95 633.90 h11.6 v7.8 l-2.8 2.8 h-6 l-2.8 -2.8 z" fill="#1f3f92" stroke="#1c1c1c" stroke-width="0.7"/><rect x="748.95" y="634.60" width="7.6" height="2.6" fill="#cdc8b6"/><text x="777.90" y="631.50" font-size="12.5" text-anchor="middle" fill="#1a1a1a" font-family="Liberation Sans">7</text><path d="M772.10 633.90 h11.6 v7.8 l-2.8 2.8 h-6 l-2.8 -2.8 z" fill="#0a7f0a" stroke="#1c1c1c" stroke-width="0.7"/><rect x="774.10" y="634.60" width="7.6" height="2.6" fill="#cdc8b6"/><text x="803.05" y="631.50" font-size="12.5" text-anchor="middle" fill="#1a1a1a" font-family="Liberation Sans">8</text><path d="M797.25 633.90 h11.6 v7.8 l-2.8 2.8 h-6 l-2.8 -2.8 z" fill="#1f3f92" stroke="#1c1c1c" stroke-width="0.7"/><rect x="799.25" y="634.60" width="7.6" height="2.6" fill="#cdc8b6"/><text x="828.20" y="631.50" font-size="12.5" text-anchor="middle" fill="#1a1a1a" font-family="Liberation Sans">9</text><path d="M822.40 633.90 h11.6 v7.8 l-2.8 2.8 h-6 l-2.8 -2.8 z" fill="#0a7f0a" stroke="#1c1c1c" stroke-width="0.7"/><rect x="824.40" y="634.60" width="7.6" height="2.6" fill="#cdc8b6"/><text x="853.35" y="631.50" font-size="12.5" text-anchor="middle" fill="#1a1a1a" font-family="Liberation Sans">10</text><path d="M847.55 633.90 h11.6 v7.8 l-2.8 2.8 h-6 l-2.8 -2.8 z" fill="#1f3f92" stroke="#1c1c1c" stroke-width="0.7"/><rect x="849.55" y="634.60" width="7.6" height="2.6" fill="#cdc8b6"/><text x="878.50" y="631.50" font-size="12.5" text-anchor="middle" fill="#1a1a1a" font-family="Liberation Sans">11</text><path d="M872.70 633.90 h11.6 v7.8 l-2.8 2.8 h-6 l-2.8 -2.8 z" fill="#0a7f0a" stroke="#1c1c1c" stroke-width="0.7"/><rect x="874.70" y="634.60" width="7.6" height="2.6" fill="#cdc8b6"/><text x="903.65" y="631.50" font-size="12.5" text-anchor="middle" fill="#1a1a1a" font-family="Liberation Sans">12</text><path d="M897.85 633.90 h11.6 v7.8 l-2.8 2.8 h-6 l-2.8 -2.8 z" fill="#1f3f92" stroke="#1c1c1c" stroke-width="0.7"/><rect x="899.85" y="634.60" width="7.6" height="2.6" fill="#cdc8b6"/><text x="928.80" y="631.50" font-size="12.5" text-anchor="middle" fill="#1a1a1a" font-family="Liberation Sans">13</text><path d="M923.00 633.90 h11.6 v7.8 l-2.8 2.8 h-6 l-2.8 -2.8 z" fill="#0a7f0a" stroke="#1c1c1c" stroke-width="0.7"/><rect x="925.00" y="634.60" width="7.6" height="2.6" fill="#cdc8b6"/><text x="953.95" y="631.50" font-size="12.5" text-anchor="middle" fill="#1a1a1a" font-family="Liberation Sans">14</text><path d="M948.15 633.90 h11.6 v7.8 l-2.8 2.8 h-6 l-2.8 -2.8 z" fill="#1f3f92" stroke="#1c1c1c" stroke-width="0.7"/><rect x="950.15" y="634.60" width="7.6" height="2.6" fill="#cdc8b6"/><text x="979.10" y="631.50" font-size="12.5" text-anchor="middle" fill="#1a1a1a" font-family="Liberation Sans">15</text><path d="M973.30 633.90 h11.6 v7.8 l-2.8 2.8 h-6 l-2.8 -2.8 z" fill="#0a7f0a" stroke="#1c1c1c" stroke-width="0.7"/><rect x="975.30" y="634.60" width="7.6" height="2.6" fill="#cdc8b6"/><text x="1004.25" y="631.50" font-size="12.5" text-anchor="middle" fill="#1a1a1a" font-family="Liberation Sans">16</text><path d="M998.45 633.90 h11.6 v7.8 l-2.8 2.8 h-6 l-2.8 -2.8 z" fill="#1f3f92" stroke="#1c1c1c" stroke-width="0.7"/><rect x="1000.45" y="634.60" width="7.6" height="2.6" fill="#cdc8b6"/><text x="1029.40" y="631.50" font-size="12.5" text-anchor="middle" fill="#1a1a1a" font-family="Liberation Sans">17</text><path d="M1023.60 633.90 h11.6 v7.8 l-2.8 2.8 h-6 l-2.8 -2.8 z" fill="#0a7f0a" stroke="#1c1c1c" stroke-width="0.7"/><rect x="1025.60" y="634.60" width="7.6" height="2.6" fill="#cdc8b6"/><text x="1054.55" y="631.50" font-size="12.5" text-anchor="middle" fill="#1a1a1a" font-family="Liberation Sans">18</text><path d="M1048.75 633.90 h11.6 v7.8 l-2.8 2.8 h-6 l-2.8 -2.8 z" fill="#1f3f92" stroke="#1c1c1c" stroke-width="0.7"/><rect x="1050.75" y="634.60" width="7.6" height="2.6" fill="#cdc8b6"/><text x="1079.70" y="631.50" font-size="12.5" text-anchor="middle" fill="#1a1a1a" font-family="Liberation Sans">19</text><path d="M1073.90 633.90 h11.6 v7.8 l-2.8 2.8 h-6 l-2.8 -2.8 z" fill="#0a7f0a" stroke="#1c1c1c" stroke-width="0.7"/><rect x="1075.90" y="634.60" width="7.6" height="2.6" fill="#cdc8b6"/><text x="1104.85" y="631.50" font-size="12.5" text-anchor="middle" fill="#1a1a1a" font-family="Liberation Sans">20</text><path d="M1099.05 633.90 h11.6 v7.8 l-2.8 2.8 h-6 l-2.8 -2.8 z" fill="#1f3f92" stroke="#1c1c1c" stroke-width="0.7"/><rect x="1101.05" y="634.60" width="7.6" height="2.6" fill="#cdc8b6"/><text x="1130.00" y="631.50" font-size="12.5" text-anchor="middle" fill="#1a1a1a" font-family="Liberation Sans">21</text><path d="M1124.20 633.90 h11.6 v7.8 l-2.8 2.8 h-6 l-2.8 -2.8 z" fill="#0a7f0a" stroke="#1c1c1c" stroke-width="0.7"/><rect x="1126.20" y="634.60" width="7.6" height="2.6" fill="#cdc8b6"/><text x="1155.15" y="631.50" font-size="12.5" text-anchor="middle" fill="#1a1a1a" font-family="Liberation Sans">22</text><path d="M1149.35 633.90 h11.6 v7.8 l-2.8 2.8 h-6 l-2.8 -2.8 z" fill="#1f3f92" stroke="#1c1c1c" stroke-width="0.7"/><rect x="1151.35" y="634.60" width="7.6" height="2.6" fill="#cdc8b6"/><text x="1180.30" y="631.50" font-size="12.5" text-anchor="middle" fill="#1a1a1a" font-family="Liberation Sans">23</text><path d="M1174.50 633.90 h11.6 v7.8 l-2.8 2.8 h-6 l-2.8 -2.8 z" fill="#0a7f0a" stroke="#1c1c1c" stroke-width="0.7"/><rect x="1176.50" y="634.60" width="7.6" height="2.6" fill="#cdc8b6"/><text x="1205.45" y="631.50" font-size="12.5" text-anchor="middle" fill="#1a1a1a" font-family="Liberation Sans">24</text><path d="M1199.65 633.90 h11.6 v7.8 l-2.8 2.8 h-6 l-2.8 -2.8 z" fill="#1f3f92" stroke="#1c1c1c" stroke-width="0.7"/><rect x="1201.65" y="634.60" width="7.6" height="2.6" fill="#cdc8b6"/><text x="1230.60" y="631.50" font-size="12.5" text-anchor="middle" fill="#1a1a1a" font-family="Liberation Sans">25</text><path d="M1224.80 633.90 h11.6 v7.8 l-2.8 2.8 h-6 l-2.8 -2.8 z" fill="#474747" stroke="#1c1c1c" stroke-width="0.7"/><rect x="1226.80" y="634.60" width="7.6" height="2.6" fill="#cdc8b6"/></svg>
<div style="position:absolute;left:540px;top:661.97px;width:786px;height:71.23px;background:#b9babf"></div>
<div style="position:absolute;left:548px;top:661.97px;width:770px;height:69.53px;background:#f8fafc"></div>
<div style="position:absolute;left:549px;top:662.27px;width:767px;height:12.6px;background:linear-gradient(to bottom,#d8e6f5 0px,#8ab4e2 1px,#93b6e0 45%,#93acc9 70%,#8f9aa8 90%,#8e9299 100%)"></div>
<div style="position:absolute;left:549px;top:676.07px;width:767px;height:54.13px;background:linear-gradient(170deg,#d8e6d5 0%,#c9dcc5 50%,#b9d1b4 100%)"></div>
<div class="t" style="left:552.5px;top:662.57px;height:13px;line-height:13px;font-size:9.3px;color:#f4f7fb;font-weight:400;">PFC-29</div>
<div class="t" style="left:1097.00px;width:400px;text-align:center;top:662.37px;height:13px;line-height:13px;font-size:9.6px;color:#eef2f8;font-weight:400;">V</div>
<div class="t" style="left:1108.70px;width:400px;text-align:center;top:662.37px;height:13px;line-height:13px;font-size:9.6px;color:#eef2f8;font-weight:400;">H</div>
<svg style="left:0;top:0" width="1" height="1"><text x="627.00" y="703.50" font-size="12.5" text-anchor="middle" fill="#1a1a1a" font-family="Liberation Sans">1</text><path d="M621.20 705.90 h11.6 v7.8 l-2.8 2.8 h-6 l-2.8 -2.8 z" fill="#474747" stroke="#1c1c1c" stroke-width="0.7"/><rect x="623.20" y="706.60" width="7.6" height="2.6" fill="#cdc8b6"/><text x="652.15" y="703.50" font-size="12.5" text-anchor="middle" fill="#1a1a1a" font-family="Liberation Sans">2</text><path d="M646.35 705.90 h11.6 v7.8 l-2.8 2.8 h-6 l-2.8 -2.8 z" fill="#474747" stroke="#1c1c1c" stroke-width="0.7"/><rect x="648.35" y="706.60" width="7.6" height="2.6" fill="#cdc8b6"/><text x="677.30" y="703.50" font-size="12.5" text-anchor="middle" fill="#1a1a1a" font-family="Liberation Sans">3</text><path d="M671.50 705.90 h11.6 v7.8 l-2.8 2.8 h-6 l-2.8 -2.8 z" fill="#474747" stroke="#1c1c1c" stroke-width="0.7"/><rect x="673.50" y="706.60" width="7.6" height="2.6" fill="#cdc8b6"/><text x="702.45" y="703.50" font-size="12.5" text-anchor="middle" fill="#1a1a1a" font-family="Liberation Sans">4</text><path d="M696.65 705.90 h11.6 v7.8 l-2.8 2.8 h-6 l-2.8 -2.8 z" fill="#474747" stroke="#1c1c1c" stroke-width="0.7"/><rect x="698.65" y="706.60" width="7.6" height="2.6" fill="#cdc8b6"/><text x="727.60" y="703.50" font-size="12.5" text-anchor="middle" fill="#1a1a1a" font-family="Liberation Sans">5</text><path d="M721.80 705.90 h11.6 v7.8 l-2.8 2.8 h-6 l-2.8 -2.8 z" fill="#474747" stroke="#1c1c1c" stroke-width="0.7"/><rect x="723.80" y="706.60" width="7.6" height="2.6" fill="#cdc8b6"/><text x="752.75" y="703.50" font-size="12.5" text-anchor="middle" fill="#1a1a1a" font-family="Liberation Sans">6</text><path d="M746.95 705.90 h11.6 v7.8 l-2.8 2.8 h-6 l-2.8 -2.8 z" fill="#474747" stroke="#1c1c1c" stroke-width="0.7"/><rect x="748.95" y="706.60" width="7.6" height="2.6" fill="#cdc8b6"/><text x="777.90" y="703.50" font-size="12.5" text-anchor="middle" fill="#1a1a1a" font-family="Liberation Sans">7</text><path d="M772.10 705.90 h11.6 v7.8 l-2.8 2.8 h-6 l-2.8 -2.8 z" fill="#474747" stroke="#1c1c1c" stroke-width="0.7"/><rect x="774.10" y="706.60" width="7.6" height="2.6" fill="#cdc8b6"/><text x="803.05" y="703.50" font-size="12.5" text-anchor="middle" fill="#1a1a1a" font-family="Liberation Sans">8</text><path d="M797.25 705.90 h11.6 v7.8 l-2.8 2.8 h-6 l-2.8 -2.8 z" fill="#474747" stroke="#1c1c1c" stroke-width="0.7"/><rect x="799.25" y="706.60" width="7.6" height="2.6" fill="#cdc8b6"/><text x="828.20" y="703.50" font-size="12.5" text-anchor="middle" fill="#1a1a1a" font-family="Liberation Sans">9</text><path d="M822.40 705.90 h11.6 v7.8 l-2.8 2.8 h-6 l-2.8 -2.8 z" fill="#474747" stroke="#1c1c1c" stroke-width="0.7"/><rect x="824.40" y="706.60" width="7.6" height="2.6" fill="#cdc8b6"/><text x="853.35" y="703.50" font-size="12.5" text-anchor="middle" fill="#1a1a1a" font-family="Liberation Sans">10</text><path d="M847.55 705.90 h11.6 v7.8 l-2.8 2.8 h-6 l-2.8 -2.8 z" fill="#474747" stroke="#1c1c1c" stroke-width="0.7"/><rect x="849.55" y="706.60" width="7.6" height="2.6" fill="#cdc8b6"/><text x="878.50" y="703.50" font-size="12.5" text-anchor="middle" fill="#1a1a1a" font-family="Liberation Sans">11</text><path d="M872.70 705.90 h11.6 v7.8 l-2.8 2.8 h-6 l-2.8 -2.8 z" fill="#474747" stroke="#1c1c1c" stroke-width="0.7"/><rect x="874.70" y="706.60" width="7.6" height="2.6" fill="#cdc8b6"/><text x="903.65" y="703.50" font-size="12.5" text-anchor="middle" fill="#1a1a1a" font-family="Liberation Sans">12</text><path d="M897.85 705.90 h11.6 v7.8 l-2.8 2.8 h-6 l-2.8 -2.8 z" fill="#474747" stroke="#1c1c1c" stroke-width="0.7"/><rect x="899.85" y="706.60" width="7.6" height="2.6" fill="#cdc8b6"/><text x="928.80" y="703.50" font-size="12.5" text-anchor="middle" fill="#1a1a1a" font-family="Liberation Sans">13</text><path d="M923.00 705.90 h11.6 v7.8 l-2.8 2.8 h-6 l-2.8 -2.8 z" fill="#474747" stroke="#1c1c1c" stroke-width="0.7"/><rect x="925.00" y="706.60" width="7.6" height="2.6" fill="#cdc8b6"/><text x="953.95" y="703.50" font-size="12.5" text-anchor="middle" fill="#1a1a1a" font-family="Liberation Sans">14</text><path d="M948.15 705.90 h11.6 v7.8 l-2.8 2.8 h-6 l-2.8 -2.8 z" fill="#474747" stroke="#1c1c1c" stroke-width="0.7"/><rect x="950.15" y="706.60" width="7.6" height="2.6" fill="#cdc8b6"/><text x="979.10" y="703.50" font-size="12.5" text-anchor="middle" fill="#1a1a1a" font-family="Liberation Sans">15</text><path d="M973.30 705.90 h11.6 v7.8 l-2.8 2.8 h-6 l-2.8 -2.8 z" fill="#474747" stroke="#1c1c1c" stroke-width="0.7"/><rect x="975.30" y="706.60" width="7.6" height="2.6" fill="#cdc8b6"/><text x="1004.25" y="703.50" font-size="12.5" text-anchor="middle" fill="#1a1a1a" font-family="Liberation Sans">16</text><path d="M998.45 705.90 h11.6 v7.8 l-2.8 2.8 h-6 l-2.8 -2.8 z" fill="#474747" stroke="#1c1c1c" stroke-width="0.7"/><rect x="1000.45" y="706.60" width="7.6" height="2.6" fill="#cdc8b6"/><text x="1029.40" y="703.50" font-size="12.5" text-anchor="middle" fill="#1a1a1a" font-family="Liberation Sans">17</text><path d="M1023.60 705.90 h11.6 v7.8 l-2.8 2.8 h-6 l-2.8 -2.8 z" fill="#474747" stroke="#1c1c1c" stroke-width="0.7"/><rect x="1025.60" y="706.60" width="7.6" height="2.6" fill="#cdc8b6"/><text x="1054.55" y="703.50" font-size="12.5" text-anchor="middle" fill="#1a1a1a" font-family="Liberation Sans">18</text><path d="M1048.75 705.90 h11.6 v7.8 l-2.8 2.8 h-6 l-2.8 -2.8 z" fill="#474747" stroke="#1c1c1c" stroke-width="0.7"/><rect x="1050.75" y="706.60" width="7.6" height="2.6" fill="#cdc8b6"/><text x="1079.70" y="703.50" font-size="12.5" text-anchor="middle" fill="#1a1a1a" font-family="Liberation Sans">19</text><path d="M1073.90 705.90 h11.6 v7.8 l-2.8 2.8 h-6 l-2.8 -2.8 z" fill="#474747" stroke="#1c1c1c" stroke-width="0.7"/><rect x="1075.90" y="706.60" width="7.6" height="2.6" fill="#cdc8b6"/><text x="1104.85" y="703.50" font-size="12.5" text-anchor="middle" fill="#1a1a1a" font-family="Liberation Sans">20</text><path d="M1099.05 705.90 h11.6 v7.8 l-2.8 2.8 h-6 l-2.8 -2.8 z" fill="#474747" stroke="#1c1c1c" stroke-width="0.7"/><rect x="1101.05" y="706.60" width="7.6" height="2.6" fill="#cdc8b6"/><text x="1130.00" y="703.50" font-size="12.5" text-anchor="middle" fill="#1a1a1a" font-family="Liberation Sans">21</text><path d="M1124.20 705.90 h11.6 v7.8 l-2.8 2.8 h-6 l-2.8 -2.8 z" fill="#474747" stroke="#1c1c1c" stroke-width="0.7"/><rect x="1126.20" y="706.60" width="7.6" height="2.6" fill="#cdc8b6"/><text x="1155.15" y="703.50" font-size="12.5" text-anchor="middle" fill="#1a1a1a" font-family="Liberation Sans">22</text><path d="M1149.35 705.90 h11.6 v7.8 l-2.8 2.8 h-6 l-2.8 -2.8 z" fill="#474747" stroke="#1c1c1c" stroke-width="0.7"/><rect x="1151.35" y="706.60" width="7.6" height="2.6" fill="#cdc8b6"/><text x="1180.30" y="703.50" font-size="12.5" text-anchor="middle" fill="#1a1a1a" font-family="Liberation Sans">23</text><path d="M1174.50 705.90 h11.6 v7.8 l-2.8 2.8 h-6 l-2.8 -2.8 z" fill="#474747" stroke="#1c1c1c" stroke-width="0.7"/><rect x="1176.50" y="706.60" width="7.6" height="2.6" fill="#cdc8b6"/><text x="1205.45" y="703.50" font-size="12.5" text-anchor="middle" fill="#1a1a1a" font-family="Liberation Sans">24</text><path d="M1199.65 705.90 h11.6 v7.8 l-2.8 2.8 h-6 l-2.8 -2.8 z" fill="#474747" stroke="#1c1c1c" stroke-width="0.7"/><rect x="1201.65" y="706.60" width="7.6" height="2.6" fill="#cdc8b6"/><text x="1230.60" y="703.50" font-size="12.5" text-anchor="middle" fill="#1a1a1a" font-family="Liberation Sans">25</text><path d="M1224.80 705.90 h11.6 v7.8 l-2.8 2.8 h-6 l-2.8 -2.8 z" fill="#474747" stroke="#1c1c1c" stroke-width="0.7"/><rect x="1226.80" y="706.60" width="7.6" height="2.6" fill="#cdc8b6"/></svg>
<div style="position:absolute;left:540px;top:733.8px;width:786px;height:143.07px;background:#b9babf"></div>
<div style="position:absolute;left:548px;top:733.8px;width:770px;height:141.37px;background:#f8fafc"></div>
<div style="position:absolute;left:549px;top:734.1px;width:767px;height:12.6px;background:linear-gradient(to bottom,#d8e6f5 0px,#8ab4e2 1px,#93b6e0 45%,#93acc9 70%,#8f9aa8 90%,#8e9299 100%)"></div>
<div style="position:absolute;left:549px;top:747.9px;width:767px;height:125.97px;background:linear-gradient(170deg,#f0f3f6 0%,#e9edf2 100%)"></div>
<div class="t" style="left:552.5px;top:734.40px;height:13px;line-height:13px;font-size:9.3px;color:#f4f7fb;font-weight:400;">Rangierpanel</div>
<div class="t" style="left:1091.30px;width:400px;text-align:center;top:733.80px;height:16px;line-height:16px;font-size:11.2px;color:#eef2f8;font-weight:400;">V</div>
<div class="t" style="left:1106.70px;width:400px;text-align:center;top:733.80px;height:16px;line-height:16px;font-size:11.2px;color:#eef2f8;font-weight:400;">H</div>
<svg style="left:0;top:0" width="1" height="1"><text transform="translate(933 839.3) scale(0.957 1)" x="0" y="0" font-size="66.8" text-anchor="middle" fill="#bfc2c7" font-family="Liberation Sans">Rangierpanel</text></svg>
<div style="position:absolute;left:540px;top:877.47px;width:786px;height:71.23px;background:#b9babf"></div>
<div style="position:absolute;left:548px;top:877.47px;width:770px;height:69.53px;background:#f8fafc"></div>
<div style="position:absolute;left:549px;top:877.77px;width:767px;height:12.6px;background:linear-gradient(to bottom,#d8e6f5 0px,#8ab4e2 1px,#93b6e0 45%,#93acc9 70%,#8f9aa8 90%,#8e9299 100%)"></div>
<div style="position:absolute;left:549px;top:891.57px;width:767px;height:54.13px;background:linear-gradient(170deg,#d8e6d5 0%,#c9dcc5 50%,#b9d1b4 100%)"></div>
<div class="t" style="left:552.5px;top:878.07px;height:13px;line-height:13px;font-size:9.3px;color:#f4f7fb;font-weight:400;">PFC-26</div>
<div class="t" style="left:1097.00px;width:400px;text-align:center;top:877.87px;height:13px;line-height:13px;font-size:9.6px;color:#eef2f8;font-weight:400;">V</div>
<div class="t" style="left:1108.70px;width:400px;text-align:center;top:877.87px;height:13px;line-height:13px;font-size:9.6px;color:#eef2f8;font-weight:400;">H</div>
<svg style="left:0;top:0" width="1" height="1"><text x="627.00" y="918.50" font-size="12.5" text-anchor="middle" fill="#1a1a1a" font-family="Liberation Sans">1</text><path d="M621.20 920.90 h11.6 v7.8 l-2.8 2.8 h-6 l-2.8 -2.8 z" fill="#0a7f0a" stroke="#1c1c1c" stroke-width="0.7"/><rect x="623.20" y="921.60" width="7.6" height="2.6" fill="#cdc8b6"/><text x="652.15" y="918.50" font-size="12.5" text-anchor="middle" fill="#1a1a1a" font-family="Liberation Sans">2</text><path d="M646.35 920.90 h11.6 v7.8 l-2.8 2.8 h-6 l-2.8 -2.8 z" fill="#0a7f0a" stroke="#1c1c1c" stroke-width="0.7"/><rect x="648.35" y="921.60" width="7.6" height="2.6" fill="#cdc8b6"/><text x="677.30" y="918.50" font-size="12.5" text-anchor="middle" fill="#1a1a1a" font-family="Liberation Sans">3</text><path d="M671.50 920.90 h11.6 v7.8 l-2.8 2.8 h-6 l-2.8 -2.8 z" fill="#0a7f0a" stroke="#1c1c1c" stroke-width="0.7"/><rect x="673.50" y="921.60" width="7.6" height="2.6" fill="#cdc8b6"/><text x="702.45" y="918.50" font-size="12.5" text-anchor="middle" fill="#1a1a1a" font-family="Liberation Sans">4</text><path d="M696.65 920.90 h11.6 v7.8 l-2.8 2.8 h-6 l-2.8 -2.8 z" fill="#0a7f0a" stroke="#1c1c1c" stroke-width="0.7"/><rect x="698.65" y="921.60" width="7.6" height="2.6" fill="#cdc8b6"/><text x="727.60" y="918.50" font-size="12.5" text-anchor="middle" fill="#1a1a1a" font-family="Liberation Sans">5</text><path d="M721.80 920.90 h11.6 v7.8 l-2.8 2.8 h-6 l-2.8 -2.8 z" fill="#0a7f0a" stroke="#1c1c1c" stroke-width="0.7"/><rect x="723.80" y="921.60" width="7.6" height="2.6" fill="#cdc8b6"/><text x="752.75" y="918.50" font-size="12.5" text-anchor="middle" fill="#1a1a1a" font-family="Liberation Sans">6</text><path d="M746.95 920.90 h11.6 v7.8 l-2.8 2.8 h-6 l-2.8 -2.8 z" fill="#0a7f0a" stroke="#1c1c1c" stroke-width="0.7"/><rect x="748.95" y="921.60" width="7.6" height="2.6" fill="#cdc8b6"/><text x="777.90" y="918.50" font-size="12.5" text-anchor="middle" fill="#1a1a1a" font-family="Liberation Sans">7</text><path d="M772.10 920.90 h11.6 v7.8 l-2.8 2.8 h-6 l-2.8 -2.8 z" fill="#0a7f0a" stroke="#1c1c1c" stroke-width="0.7"/><rect x="774.10" y="921.60" width="7.6" height="2.6" fill="#cdc8b6"/><text x="803.05" y="918.50" font-size="12.5" text-anchor="middle" fill="#1a1a1a" font-family="Liberation Sans">8</text><path d="M797.25 920.90 h11.6 v7.8 l-2.8 2.8 h-6 l-2.8 -2.8 z" fill="#0a7f0a" stroke="#1c1c1c" stroke-width="0.7"/><rect x="799.25" y="921.60" width="7.6" height="2.6" fill="#cdc8b6"/><text x="828.20" y="918.50" font-size="12.5" text-anchor="middle" fill="#1a1a1a" font-family="Liberation Sans">9</text><path d="M822.40 920.90 h11.6 v7.8 l-2.8 2.8 h-6 l-2.8 -2.8 z" fill="#0a7f0a" stroke="#1c1c1c" stroke-width="0.7"/><rect x="824.40" y="921.60" width="7.6" height="2.6" fill="#cdc8b6"/><text x="853.35" y="918.50" font-size="12.5" text-anchor="middle" fill="#1a1a1a" font-family="Liberation Sans">10</text><path d="M847.55 920.90 h11.6 v7.8 l-2.8 2.8 h-6 l-2.8 -2.8 z" fill="#0a7f0a" stroke="#1c1c1c" stroke-width="0.7"/><rect x="849.55" y="921.60" width="7.6" height="2.6" fill="#cdc8b6"/><text x="878.50" y="918.50" font-size="12.5" text-anchor="middle" fill="#1a1a1a" font-family="Liberation Sans">11</text><path d="M872.70 920.90 h11.6 v7.8 l-2.8 2.8 h-6 l-2.8 -2.8 z" fill="#0a7f0a" stroke="#1c1c1c" stroke-width="0.7"/><rect x="874.70" y="921.60" width="7.6" height="2.6" fill="#cdc8b6"/><text x="903.65" y="918.50" font-size="12.5" text-anchor="middle" fill="#1a1a1a" font-family="Liberation Sans">12</text><path d="M897.85 920.90 h11.6 v7.8 l-2.8 2.8 h-6 l-2.8 -2.8 z" fill="#0a7f0a" stroke="#1c1c1c" stroke-width="0.7"/><rect x="899.85" y="921.60" width="7.6" height="2.6" fill="#cdc8b6"/><text x="928.80" y="918.50" font-size="12.5" text-anchor="middle" fill="#1a1a1a" font-family="Liberation Sans">13</text><path d="M923.00 920.90 h11.6 v7.8 l-2.8 2.8 h-6 l-2.8 -2.8 z" fill="#0a7f0a" stroke="#1c1c1c" stroke-width="0.7"/><rect x="925.00" y="921.60" width="7.6" height="2.6" fill="#cdc8b6"/><text x="953.95" y="918.50" font-size="12.5" text-anchor="middle" fill="#1a1a1a" font-family="Liberation Sans">14</text><path d="M948.15 920.90 h11.6 v7.8 l-2.8 2.8 h-6 l-2.8 -2.8 z" fill="#0a7f0a" stroke="#1c1c1c" stroke-width="0.7"/><rect x="950.15" y="921.60" width="7.6" height="2.6" fill="#cdc8b6"/><text x="979.10" y="918.50" font-size="12.5" text-anchor="middle" fill="#1a1a1a" font-family="Liberation Sans">15</text><path d="M973.30 920.90 h11.6 v7.8 l-2.8 2.8 h-6 l-2.8 -2.8 z" fill="#0a7f0a" stroke="#1c1c1c" stroke-width="0.7"/><rect x="975.30" y="921.60" width="7.6" height="2.6" fill="#cdc8b6"/><text x="1004.25" y="918.50" font-size="12.5" text-anchor="middle" fill="#1a1a1a" font-family="Liberation Sans">16</text><path d="M998.45 920.90 h11.6 v7.8 l-2.8 2.8 h-6 l-2.8 -2.8 z" fill="#1f3f92" stroke="#1c1c1c" stroke-width="0.7"/><rect x="1000.45" y="921.60" width="7.6" height="2.6" fill="#cdc8b6"/><text x="1029.40" y="918.50" font-size="12.5" text-anchor="middle" fill="#1a1a1a" font-family="Liberation Sans">17</text><path d="M1023.60 920.90 h11.6 v7.8 l-2.8 2.8 h-6 l-2.8 -2.8 z" fill="#1f3f92" stroke="#1c1c1c" stroke-width="0.7"/><rect x="1025.60" y="921.60" width="7.6" height="2.6" fill="#cdc8b6"/><text x="1054.55" y="918.50" font-size="12.5" text-anchor="middle" fill="#1a1a1a" font-family="Liberation Sans">18</text><path d="M1048.75 920.90 h11.6 v7.8 l-2.8 2.8 h-6 l-2.8 -2.8 z" fill="#1f3f92" stroke="#1c1c1c" stroke-width="0.7"/><rect x="1050.75" y="921.60" width="7.6" height="2.6" fill="#cdc8b6"/><text x="1079.70" y="918.50" font-size="12.5" text-anchor="middle" fill="#1a1a1a" font-family="Liberation Sans">19</text><path d="M1073.90 920.90 h11.6 v7.8 l-2.8 2.8 h-6 l-2.8 -2.8 z" fill="#1f3f92" stroke="#1c1c1c" stroke-width="0.7"/><rect x="1075.90" y="921.60" width="7.6" height="2.6" fill="#cdc8b6"/><text x="1104.85" y="918.50" font-size="12.5" text-anchor="middle" fill="#1a1a1a" font-family="Liberation Sans">20</text><path d="M1099.05 920.90 h11.6 v7.8 l-2.8 2.8 h-6 l-2.8 -2.8 z" fill="#1f3f92" stroke="#1c1c1c" stroke-width="0.7"/><rect x="1101.05" y="921.60" width="7.6" height="2.6" fill="#cdc8b6"/><text x="1130.00" y="918.50" font-size="12.5" text-anchor="middle" fill="#1a1a1a" font-family="Liberation Sans">21</text><path d="M1124.20 920.90 h11.6 v7.8 l-2.8 2.8 h-6 l-2.8 -2.8 z" fill="#1f3f92" stroke="#1c1c1c" stroke-width="0.7"/><rect x="1126.20" y="921.60" width="7.6" height="2.6" fill="#cdc8b6"/><text x="1155.15" y="918.50" font-size="12.5" text-anchor="middle" fill="#1a1a1a" font-family="Liberation Sans">22</text><path d="M1149.35 920.90 h11.6 v7.8 l-2.8 2.8 h-6 l-2.8 -2.8 z" fill="#1f3f92" stroke="#1c1c1c" stroke-width="0.7"/><rect x="1151.35" y="921.60" width="7.6" height="2.6" fill="#cdc8b6"/><text x="1180.30" y="918.50" font-size="12.5" text-anchor="middle" fill="#1a1a1a" font-family="Liberation Sans">23</text><path d="M1174.50 920.90 h11.6 v7.8 l-2.8 2.8 h-6 l-2.8 -2.8 z" fill="#1f3f92" stroke="#1c1c1c" stroke-width="0.7"/><rect x="1176.50" y="921.60" width="7.6" height="2.6" fill="#cdc8b6"/><text x="1205.45" y="918.50" font-size="12.5" text-anchor="middle" fill="#1a1a1a" font-family="Liberation Sans">24</text><path d="M1199.65 920.90 h11.6 v7.8 l-2.8 2.8 h-6 l-2.8 -2.8 z" fill="#1f3f92" stroke="#1c1c1c" stroke-width="0.7"/><rect x="1201.65" y="921.60" width="7.6" height="2.6" fill="#cdc8b6"/><text x="1230.60" y="918.50" font-size="12.5" text-anchor="middle" fill="#1a1a1a" font-family="Liberation Sans">25</text><path d="M1224.80 920.90 h11.6 v7.8 l-2.8 2.8 h-6 l-2.8 -2.8 z" fill="#1f3f92" stroke="#1c1c1c" stroke-width="0.7"/><rect x="1226.80" y="921.60" width="7.6" height="2.6" fill="#cdc8b6"/></svg>
<div style="position:absolute;left:1502px;top:157.83px;width:68px;height:23.5px;background:#a6d3a6;border-radius:4px"></div>
<div class="t" style="left:1505px;top:160.33px;height:18px;line-height:18px;font-size:12.5px;color:#2a2a2a;font-weight:400;">In Betrieb</div>
<div style="position:absolute;left:1575px;top:157.83px;width:85.5px;height:23.5px;background:#f6e3e5;border-radius:4px"></div>
<div class="t" style="left:1578.4px;top:161.33px;height:17px;line-height:17px;font-size:11.8px;color:#2a2a2a;font-weight:400;">IOS XE 17.1</div>
<svg style="left:0;top:0" width="1" height="1"><path d="M1328 168.83 L1334.5 158.43 H1560 L1558 168.83 L1560 179.23 H1334.5 Z" fill="#0f870f"/></svg>
<div class="t" style="left:1340.2px;top:158.53px;height:18px;line-height:18px;font-size:12.5px;color:#f4fff4;font-weight:400;">WO-20210915-1 Drucker aufstelle</div>
<div class="t" style="left:1425.6px;top:182.33px;height:23px;line-height:23px;font-size:16.4px;color:#5c5c5c;font-weight:400;">Layer 2 Switch / LAN Etagenversorgung</div>
<svg style="left:0;top:0" width="1" height="1"><path d="M1328 384.33 L1334.5 373.93 H1560 L1558 384.33 L1560 394.73 H1334.5 Z" fill="#0f870f"/></svg>
<div class="t" style="left:1340.2px;top:374.03px;height:18px;line-height:18px;font-size:12.5px;color:#f4fff4;font-weight:400;">WO-20210915-1 Drucker aufstelle</div>
<div class="t" style="left:1425.6px;top:397.03px;height:24px;line-height:24px;font-size:16.85px;color:#5c5c5c;font-weight:400;">Datendosen / Büro Verkabelung</div>
<div class="t" style="left:1425.4px;top:445.77px;height:22px;line-height:22px;font-size:15.4px;color:#1e1e1e;font-weight:400;">PFC-32</div>
<div class="t" style="left:1425.4px;top:469.17px;height:24px;line-height:24px;font-size:16.8px;color:#5c5c5c;font-weight:400;">Datendosen / Büro Verkabelung</div>
<div class="t" style="left:1425.4px;top:589.43px;height:22px;line-height:22px;font-size:15.4px;color:#1e1e1e;font-weight:400;">PFC-30</div>
<div class="t" style="left:1425.4px;top:612.83px;height:24px;line-height:24px;font-size:16.8px;color:#5c5c5c;font-weight:400;">Telefondosen / Büro Verkabelung</div>
<div class="t" style="left:1425.4px;top:661.27px;height:22px;line-height:22px;font-size:15.4px;color:#1e1e1e;font-weight:400;">PFC-29</div>
<div class="t" style="left:1425.4px;top:684.67px;height:24px;line-height:24px;font-size:16.8px;color:#5c5c5c;font-weight:400;">Telefondosen / Büro Verkabelung</div>
<div class="t" style="left:1425.4px;top:876.77px;height:22px;line-height:22px;font-size:15.4px;color:#1e1e1e;font-weight:400;">PFC-26</div>
<div class="t" style="left:1425.4px;top:900.17px;height:24px;line-height:24px;font-size:16.8px;color:#5c5c5c;font-weight:400;">Anbindung HVT Bucht 1</div>
<div style="position:absolute;left:1485px;top:876.97px;width:115px;height:23px;background:#e5e7fb;border-radius:4px"></div>
<div class="t" style="left:1489px;top:879.97px;height:17px;line-height:17px;font-size:12.4px;color:#222;font-weight:400;">» Rechenzentrum</div>
<div style="position:absolute;left:1900.4px;top:254.4px;width:7.8px;height:236px;background:#b9b9b9"></div>
<svg style="left:0;top:0" width="1" height="1"><g fill="none" stroke="#b6b6b6">
<circle cx="1871.3" cy="850.4" r="9.2" stroke-width="3.2"/>
<path d="M1866 850.4 h10.6 M1871.3 845.1 v10.6" stroke-width="1.9"/>
<path d="M1878.5 857.5 L1887 866" stroke-width="3.6"/>
<circle cx="1871.3" cy="885" r="9.2" stroke-width="3.2"/>
<path d="M1866 885 h10.6" stroke-width="1.9"/>
<path d="M1878.5 892 L1887 900.5" stroke-width="3.6"/>
<path d="M1863.3 917 v-5.2 h8 M1877.5 911.8 h7.7 v5.2 M1885.2 928 v5.6 h-7.7 M1871.3 933.6 h-8 v-5.6" stroke-width="2.2"/>
<rect x="1864" y="948" width="20" height="19.5" stroke-width="1.5"/>
</g>
<g fill="#fff" stroke="#b6b6b6" stroke-width="1.3">
<rect x="1861.2" y="945.2" width="5" height="5"/><rect x="1881.8" y="945.2" width="5" height="5"/><rect x="1861.2" y="965.2" width="5" height="5"/><rect x="1881.8" y="965.2" width="5" height="5"/>
</g>
<text x="1874" y="963.5" font-size="15" fill="#b6b6b6" text-anchor="middle" font-family="Liberation Sans">A</text>
</svg>
<div style="position:absolute;left:605.80px;top:162.50px;height:16px;transform-origin:0 100%;transform:rotate(-39deg);background:rgba(255,110,110,0.17);border-radius:3px;padding:0 11px 0 6px;line-height:16px;font-size:12.3px;color:#1e1e1e;white-space:nowrap;font-family:&quot;Liberation Sans&quot;">101 - VLAN BIO</div><div style="position:absolute;left:628.46px;top:162.50px;height:16px;transform-origin:0 100%;transform:rotate(-39deg);background:rgba(255,110,110,0.17);border-radius:3px;padding:0 11px 0 6px;line-height:16px;font-size:12.3px;color:#1e1e1e;white-space:nowrap;font-family:&quot;Liberation Sans&quot;">101 - VLAN BIO</div><div style="position:absolute;left:651.12px;top:162.50px;height:16px;transform-origin:0 100%;transform:rotate(-39deg);background:rgba(255,110,110,0.17);border-radius:3px;padding:0 11px 0 6px;line-height:16px;font-size:12.3px;color:#1e1e1e;white-space:nowrap;font-family:&quot;Liberation Sans&quot;">101 - VLAN BIO</div><div style="position:absolute;left:673.78px;top:162.50px;height:16px;transform-origin:0 100%;transform:rotate(-39deg);background:rgba(255,110,110,0.17);border-radius:3px;padding:0 11px 0 6px;line-height:16px;font-size:12.3px;color:#1e1e1e;white-space:nowrap;font-family:&quot;Liberation Sans&quot;">101 - VLAN BIO</div><div style="position:absolute;left:696.44px;top:162.50px;height:16px;transform-origin:0 100%;transform:rotate(-39deg);background:rgba(255,110,110,0.17);border-radius:3px;padding:0 11px 0 6px;line-height:16px;font-size:12.3px;color:#1e1e1e;white-space:nowrap;font-family:&quot;Liberation Sans&quot;">101 - VLAN BIO</div><div style="position:absolute;left:719.10px;top:162.50px;height:16px;transform-origin:0 100%;transform:rotate(-39deg);background:rgba(255,110,110,0.17);border-radius:3px;padding:0 11px 0 6px;line-height:16px;font-size:12.3px;color:#1e1e1e;white-space:nowrap;font-family:&quot;Liberation Sans&quot;">101 - VLAN BIO</div><div style="position:absolute;left:749.70px;top:162.50px;height:16px;transform-origin:0 100%;transform:rotate(-39deg);background:rgba(255,110,110,0.17);border-radius:3px;padding:0 11px 0 6px;line-height:16px;font-size:12.3px;color:#1e1e1e;white-space:nowrap;font-family:&quot;Liberation Sans&quot;">101 - VLAN BIO</div><div style="position:absolute;left:772.36px;top:162.50px;height:16px;transform-origin:0 100%;transform:rotate(-39deg);background:rgba(255,110,110,0.17);border-radius:3px;padding:0 11px 0 6px;line-height:16px;font-size:12.3px;color:#1e1e1e;white-space:nowrap;font-family:&quot;Liberation Sans&quot;">101 - VLAN BIO</div><div style="position:absolute;left:795.02px;top:162.50px;height:16px;transform-origin:0 100%;transform:rotate(-39deg);background:rgba(255,110,110,0.17);border-radius:3px;padding:0 11px 0 6px;line-height:16px;font-size:12.3px;color:#1e1e1e;white-space:nowrap;font-family:&quot;Liberation Sans&quot;">101 - VLAN BIO</div><div style="position:absolute;left:817.68px;top:162.50px;height:16px;transform-origin:0 100%;transform:rotate(-39deg);background:rgba(255,110,110,0.17);border-radius:3px;padding:0 11px 0 6px;line-height:16px;font-size:12.3px;color:#1e1e1e;white-space:nowrap;font-family:&quot;Liberation Sans&quot;">101 - VLAN BIO</div><div style="position:absolute;left:840.34px;top:162.50px;height:16px;transform-origin:0 100%;transform:rotate(-39deg);background:rgba(255,110,110,0.17);border-radius:3px;padding:0 11px 0 6px;line-height:16px;font-size:12.3px;color:#1e1e1e;white-space:nowrap;font-family:&quot;Liberation Sans&quot;">101 - VLAN BIO</div><div style="position:absolute;left:863.00px;top:162.50px;height:16px;transform-origin:0 100%;transform:rotate(-39deg);background:rgba(255,110,110,0.17);border-radius:3px;padding:0 11px 0 6px;line-height:16px;font-size:12.3px;color:#1e1e1e;white-space:nowrap;font-family:&quot;Liberation Sans&quot;">101 - VLAN BIO</div>
<svg style="left:0;top:0" width="1" height="1"><path d="M771 190.5 L778.5 180.5 L786 190.5 Z" fill="#0a8a0a"/></svg>
<div style="position:absolute;left:577px;top:189.5px;width:287px;height:628.5px;background:#fff;border:1px solid #a9a9a9;box-sizing:border-box;box-shadow:2px 2px 3px rgba(0,0,0,0.28)"></div>
<div style="position:absolute;left:578.5px;top:594.2px;width:284px;height:30.4px;background:#02a7fc"></div>
<div class="t" style="left:618px;top:197.00px;height:19px;line-height:19px;font-size:13.9px;color:#333;font-weight:400;">Kabel auflegen...</div>
<div class="t" style="left:618px;top:227.00px;height:19px;line-height:19px;font-size:13.9px;color:#333;font-weight:400;">Kabel auflegen (erweitert)...</div>
<div class="t" style="left:618px;top:257.30px;height:19px;line-height:19px;font-size:13.9px;color:#333;font-weight:400;">Netzwerkplan erzeugen</div>
<div class="t" style="left:618px;top:287.50px;height:19px;line-height:19px;font-size:13.9px;color:#333;font-weight:400;">Netzwerkpläne suchen</div>
<div class="t" style="left:618px;top:320.50px;height:19px;line-height:19px;font-size:13.9px;color:#333;font-weight:400;">Rückseite anzeigen</div>
<div class="t" style="left:618px;top:350.70px;height:19px;line-height:19px;font-size:13.9px;color:#333;font-weight:400;">Ausrichtung</div>
<div class="t" style="left:618px;top:380.80px;height:19px;line-height:19px;font-size:13.9px;color:#333;font-weight:400;">Verschiebe zu Ebene</div>
<div class="t" style="left:618px;top:413.80px;height:19px;line-height:19px;font-size:13.9px;color:#333;font-weight:400;">Benamungsregel anwenden...</div>
<div class="t" style="left:618px;top:446.70px;height:19px;line-height:19px;font-size:13.9px;color:#333;font-weight:400;">Umziehen...</div>
<div class="t" style="left:618px;top:477.10px;height:19px;line-height:19px;font-size:13.9px;color:#333;font-weight:400;">Austauschen...</div>
<div class="t" style="left:618px;top:507.20px;height:19px;line-height:19px;font-size:13.9px;color:#333;font-weight:400;">Kopieren...</div>
<div class="t" style="left:618px;top:536.90px;height:19px;line-height:19px;font-size:13.9px;color:#333;font-weight:400;">Entfernen</div>
<div class="t" style="left:618px;top:570.30px;height:19px;line-height:19px;font-size:13.9px;color:#333;font-weight:400;">Verbindungsübersicht...</div>
<div class="t" style="left:618px;top:600.00px;height:19px;line-height:19px;font-size:13.9px;color:#fff;font-weight:400;">Reports</div>
<div class="t" style="left:618px;top:630.20px;height:19px;line-height:19px;font-size:13.9px;color:#333;font-weight:400;">Suche enthaltene</div>
<div class="t" style="left:618px;top:663.40px;height:19px;line-height:19px;font-size:13.9px;color:#333;font-weight:400;">SNMP</div>
<div class="t" style="left:618px;top:696.20px;height:19px;line-height:19px;font-size:13.9px;color:#333;font-weight:400;">Externe Tools</div>
<div class="t" style="left:618px;top:729.60px;height:19px;line-height:19px;font-size:13.9px;color:#333;font-weight:400;">Komponentendefinition anpassen</div>
<div class="t" style="left:618px;top:762.30px;height:19px;line-height:19px;font-size:13.9px;color:#333;font-weight:400;">Eigenschaften</div>
<div class="t" style="left:618px;top:792.00px;height:19px;line-height:19px;font-size:13.9px;color:#333;font-weight:400;">Tags verwalten</div>
<svg style="left:0;top:0" width="1" height="1"><path d="M850 355.90 L854.6 360.20 L850 364.50 Z" fill="#222"/><path d="M850 386.00 L854.6 390.30 L850 394.60 Z" fill="#222"/><path d="M850 451.90 L854.6 456.20 L850 460.50 Z" fill="#222"/><path d="M850 605.20 L854.6 609.50 L850 613.80 Z" fill="#fff"/><path d="M850 635.40 L854.6 639.70 L850 644.00 Z" fill="#222"/><path d="M850 668.60 L854.6 672.90 L850 677.20 Z" fill="#222"/><path d="M850 701.40 L854.6 705.70 L850 710.00 Z" fill="#222"/><rect x="613" y="312.60" width="242" height="1" fill="#d2d2d2"/><rect x="613" y="406.00" width="242" height="1" fill="#d2d2d2"/><rect x="613" y="439.20" width="242" height="1" fill="#d2d2d2"/><rect x="613" y="562.30" width="242" height="1" fill="#d2d2d2"/><rect x="613" y="655.90" width="242" height="1" fill="#d2d2d2"/><rect x="613" y="688.70" width="242" height="1" fill="#d2d2d2"/><rect x="613" y="721.50" width="242" height="1" fill="#d2d2d2"/><rect x="613" y="754.90" width="242" height="1" fill="#d2d2d2"/></svg>
<div style="position:absolute;left:863px;top:593.5px;width:214px;height:216.0px;background:#fff;border:1px solid #a9a9a9;box-sizing:border-box;box-shadow:2px 2px 3px rgba(0,0,0,0.28)"></div>
<div style="position:absolute;left:864px;top:594.6px;width:212px;height:30px;background:#02a7fc"></div>
<div style="position:absolute;left:898px;top:626.1px;width:171px;height:1px;background:#d2d2d2"></div>
<div class="t" style="left:903px;top:600.00px;height:19px;line-height:19px;font-size:13.9px;color:#fff;font-weight:400;">Etikett drucken</div>
<div class="t" style="left:903px;top:632.80px;height:19px;line-height:19px;font-size:13.9px;color:#333;font-weight:400;">Patchverbindungen</div>
<div class="t" style="left:903px;top:663.10px;height:19px;line-height:19px;font-size:13.9px;color:#333;font-weight:400;">Netzwegübersicht</div>
<div class="t" style="left:903px;top:693.00px;height:19px;line-height:19px;font-size:13.9px;color:#333;font-weight:400;">Raumansicht</div>
<div class="t" style="left:903px;top:723.40px;height:19px;line-height:19px;font-size:13.9px;color:#333;font-weight:400;">Netzweg</div>
<div class="t" style="left:903px;top:753.40px;height:19px;line-height:19px;font-size:13.9px;color:#333;font-weight:400;">Leitungsverbindungen</div>
<div class="t" style="left:903px;top:783.60px;height:19px;line-height:19px;font-size:13.9px;color:#333;font-weight:400;">Datendose</div>
</body></html>
